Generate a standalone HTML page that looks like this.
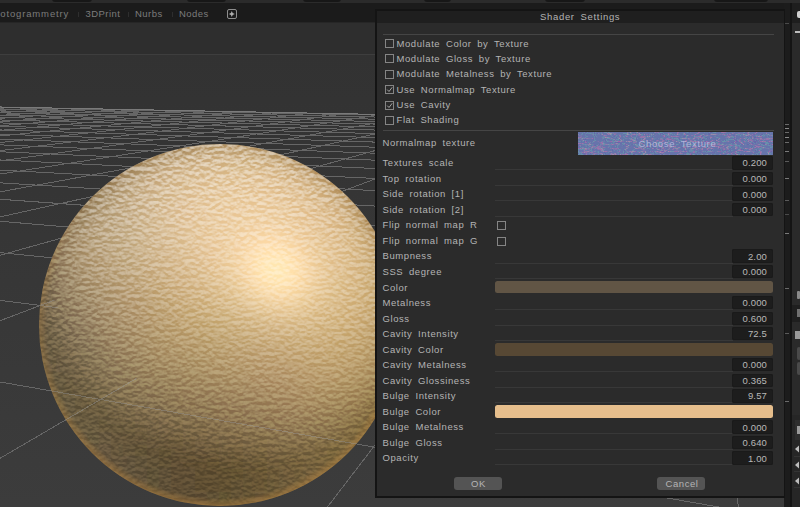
<!DOCTYPE html><html><head><meta charset="utf-8"><style>
*{margin:0;padding:0;box-sizing:border-box}
html,body{width:800px;height:507px;overflow:hidden;background:#333333;font-family:"Liberation Sans",sans-serif}
.a{position:absolute}
.t{position:absolute;font-size:9.5px;letter-spacing:0.58px;word-spacing:2.5px;color:#b4b4b4;white-space:pre;line-height:12px}
.tab{position:absolute;font-size:9.5px;letter-spacing:0.45px;color:#7c7c7c;white-space:pre;line-height:12px}
.cb{position:absolute;width:9px;height:9px;border:1px solid #858585}
.vb{position:absolute;left:732px;width:41px;height:13.4px;background:#1d1d1d;border-radius:2px;box-shadow:inset 0 0 0 1px #1a1a1a}
.vt{position:absolute;right:6px;top:1.3px;font-size:9.5px;letter-spacing:0.15px;color:#b8b8b8;line-height:12px;white-space:pre}
.bar{position:absolute;left:495px;width:278px;height:12.8px;border-radius:2.5px}
.rl{position:absolute;left:495px;width:238px;height:1px;background:#383838}
.btn{position:absolute;top:477px;height:13px;background:#545454;border-radius:3px}
</style></head><body>
<div class="a" style="left:0;top:0;width:800px;height:3px;background:#2b2b2b"></div>
<div class="a" style="left:52px;top:-6px;width:40px;height:8px;background:#171717;border-radius:3px"></div>
<div class="a" style="left:187px;top:-6px;width:39px;height:8px;background:#171717;border-radius:3px"></div>
<div class="a" style="left:303px;top:-6px;width:38px;height:8px;background:#171717;border-radius:3px"></div>
<div class="a" style="left:424px;top:-6px;width:27px;height:8px;background:#171717;border-radius:3px"></div>
<div class="a" style="left:545px;top:-6px;width:40px;height:8px;background:#171717;border-radius:3px"></div>
<div class="a" style="left:714px;top:-6px;width:54px;height:8px;background:#171717;border-radius:3px"></div>
<div class="a" style="left:0;top:2.5px;width:800px;height:19.5px;background:#1b1b1b"></div>
<div class="a" style="left:0;top:22px;width:800px;height:1px;background:#262626"></div>
<div class="tab" style="left:-13px;top:7.60px;letter-spacing:0.85px">Photogrammetry</div>
<div class="tab" style="left:85.5px;top:7.60px;">3DPrint</div>
<div class="tab" style="left:135px;top:7.60px;">Nurbs</div>
<div class="tab" style="left:179px;top:7.60px;">Nodes</div>
<div class="a" style="left:78px;top:11.5px;width:1px;height:5px;background:#2e2e2e"></div>
<div class="a" style="left:128px;top:11.5px;width:1px;height:5px;background:#2e2e2e"></div>
<div class="a" style="left:172px;top:11.5px;width:1px;height:5px;background:#2e2e2e"></div>
<div class="a" style="left:227px;top:9px;width:10px;height:10px;border:1.2px solid #8e8e8e;border-radius:2px"></div>
<svg class="a" style="left:227px;top:9px" width="10" height="10"><path d="M4.8 2 L5.7 4.1 L7.8 5 L5.7 5.9 L4.8 8 L3.9 5.9 L1.8 5 L3.9 4.1 Z" fill="#b0b0b0"/></svg>
<div class="a" style="left:0;top:55px;width:800px;height:452px;background:linear-gradient(#323232,#3c3c3c)"></div>
<div class="a" style="left:0;top:23px;width:800px;height:31px;background:#2e2e2e"></div>
<div class="a" style="left:0;top:54px;width:800px;height:1px;background:#3e3e3e"></div>
<svg width="800" height="507" style="position:absolute;left:0;top:0"><path d="M-32.4 106.4L-50.0 107.3 M-8.2 106.8L-50.0 109.1 M16.7 107.3L-50.0 111.1 M42.3 107.8L-50.0 113.4 M68.6 108.3L-50.0 115.9 M95.8 108.9L-50.0 118.8 M123.7 109.4L-50.0 122.0 M152.5 110.0L-50.0 125.7 M182.1 110.6L-50.0 129.9 M212.7 111.2L-50.0 134.9 M244.2 111.8L-50.0 140.9 M276.8 112.4L-50.0 148.0 M310.4 113.1L-50.0 156.7 M345.2 113.8L-50.0 167.7 M381.1 114.5L-50.0 181.9 M418.2 115.2L-50.0 201.0 M456.7 115.9L-50.0 228.0 M496.5 116.7L-50.0 269.2 M537.7 117.5L-50.0 339.6 M580.5 118.4L-50.0 487.6 M624.9 119.2L286.8 560.0 M671.0 120.1L747.8 560.0 M718.9 121.1L850.0 238.4 M768.7 122.1L850.0 161.5 M820.5 123.1L850.0 132.9 M-50.0 106.0L850.0 123.7 M-50.0 106.6L850.0 124.5 M-50.0 108.2L850.0 126.9 M-50.0 109.9L850.0 129.5 M-50.0 111.7L850.0 132.4 M-50.0 113.8L850.0 135.5 M-50.0 116.1L850.0 139.0 M-50.0 118.6L850.0 142.8 M-50.0 121.5L850.0 147.1 M-50.0 124.7L850.0 152.0 M-50.0 128.3L850.0 157.5 M-50.0 132.4L850.0 163.8 M-50.0 137.2L850.0 171.1 M-50.0 142.8L850.0 179.6 M-50.0 149.5L850.0 189.7 M-50.0 157.5L850.0 201.9 M-50.0 167.3L850.0 216.8 M-50.0 179.7L850.0 235.6 M-50.0 195.7L850.0 259.9 M-50.0 217.1L850.0 292.5 M-50.0 247.5L850.0 338.7 M-50.0 293.9L850.0 409.2 M-50.0 373.3L850.0 529.8 M-50.0 540.4L22.3 560.0" stroke="#666666" stroke-width="1" fill="none" shape-rendering="crispEdges"/><path d="M-56.0 105.9L1960.9 145.4" stroke="#7a7a7a" stroke-width="1" fill="none" shape-rendering="crispEdges"/></svg>
<svg width="800" height="507" style="position:absolute;left:0;top:0">
<defs>
<filter id="sblur" x="-10%" y="-10%" width="120%" height="120%"><feGaussianBlur stdDeviation="6"/></filter>
<clipPath id="sc"><circle cx="220" cy="325" r="181"/></clipPath>
<radialGradient id="srim" cx="220" cy="325" r="181" gradientUnits="userSpaceOnUse">
<stop offset="0.955" stop-color="#b08040" stop-opacity="0"/>
<stop offset="0.99" stop-color="#b08040" stop-opacity="0.45"/>
<stop offset="1" stop-color="#b08040" stop-opacity="0.6"/>
</radialGradient>
<linearGradient id="smask" x1="0" y1="144" x2="0" y2="506" gradientUnits="userSpaceOnUse">
<stop offset="0" stop-color="#fff" stop-opacity="0.9"/>
<stop offset="0.3" stop-color="#fff" stop-opacity="0.5"/>
<stop offset="0.6" stop-color="#fff" stop-opacity="0.35"/>
<stop offset="1" stop-color="#fff" stop-opacity="0.3"/>
</linearGradient>
<linearGradient id="rimv" x1="0" y1="144" x2="0" y2="506" gradientUnits="userSpaceOnUse">
<stop offset="0" stop-color="#fff" stop-opacity="0.15"/>
<stop offset="0.45" stop-color="#fff" stop-opacity="0.5"/>
<stop offset="1" stop-color="#fff" stop-opacity="1"/>
</linearGradient>
<mask id="rm" maskUnits="userSpaceOnUse" x="0" y="0" width="800" height="507"><rect x="0" y="0" width="800" height="507" fill="url(#rimv)"/></mask>
<mask id="tm" maskUnits="userSpaceOnUse" x="0" y="0" width="800" height="507"><circle cx="220" cy="325" r="181" fill="url(#smask)"/></mask>
<filter id="bump" x="0" y="0" width="100%" height="100%" color-interpolation-filters="sRGB">
<feTurbulence type="fractalNoise" baseFrequency="0.2 0.26" numOctaves="3" seed="11" result="n"/>
<feDiffuseLighting in="n" surfaceScale="3.5" diffuseConstant="1" lighting-color="#ffffff" result="l">
<feDistantLight azimuth="-90" elevation="30"/>
</feDiffuseLighting>
</filter>
</defs>
<g clip-path="url(#sc)"><g filter="url(#sblur)"><rect x="159" y="120" width="12.5" height="12.5" fill="#b8a385"/><rect x="171" y="120" width="12.5" height="12.5" fill="#b9a486"/><rect x="183" y="120" width="12.5" height="12.5" fill="#baa586"/><rect x="195" y="120" width="12.5" height="12.5" fill="#bba687"/><rect x="207" y="120" width="12.5" height="12.5" fill="#bca787"/><rect x="219" y="120" width="12.5" height="12.5" fill="#bda887"/><rect x="231" y="120" width="12.5" height="12.5" fill="#bda887"/><rect x="243" y="120" width="12.5" height="12.5" fill="#bea887"/><rect x="255" y="120" width="12.5" height="12.5" fill="#bfa887"/><rect x="267" y="120" width="12.5" height="12.5" fill="#bfa887"/><rect x="135" y="132" width="12.5" height="12.5" fill="#b4a082"/><rect x="147" y="132" width="12.5" height="12.5" fill="#b5a183"/><rect x="159" y="132" width="12.5" height="12.5" fill="#b7a284"/><rect x="171" y="132" width="12.5" height="12.5" fill="#b8a485"/><rect x="183" y="132" width="12.5" height="12.5" fill="#b9a585"/><rect x="195" y="132" width="12.5" height="12.5" fill="#bba686"/><rect x="207" y="132" width="12.5" height="12.5" fill="#bca786"/><rect x="219" y="132" width="12.5" height="12.5" fill="#bda787"/><rect x="231" y="132" width="12.5" height="12.5" fill="#bda887"/><rect x="243" y="132" width="12.5" height="12.5" fill="#bea887"/><rect x="255" y="132" width="12.5" height="12.5" fill="#bfa987"/><rect x="267" y="132" width="12.5" height="12.5" fill="#bfa886"/><rect x="279" y="132" width="12.5" height="12.5" fill="#bfa886"/><rect x="291" y="132" width="12.5" height="12.5" fill="#bfa885"/><rect x="303" y="132" width="12.5" height="12.5" fill="#bfa884"/><rect x="111" y="144" width="12.5" height="12.5" fill="#af9c7f"/><rect x="123" y="144" width="12.5" height="12.5" fill="#b19d80"/><rect x="135" y="144" width="12.5" height="12.5" fill="#b29e81"/><rect x="147" y="144" width="12.5" height="12.5" fill="#b4a082"/><rect x="159" y="144" width="12.5" height="12.5" fill="#b6a183"/><rect x="171" y="144" width="12.5" height="12.5" fill="#bca788"/><rect x="183" y="144" width="12.5" height="12.5" fill="#c6b090"/><rect x="195" y="144" width="12.5" height="12.5" fill="#cbb594"/><rect x="207" y="144" width="12.5" height="12.5" fill="#ceb895"/><rect x="219" y="144" width="12.5" height="12.5" fill="#cfb896"/><rect x="231" y="144" width="12.5" height="12.5" fill="#cfb895"/><rect x="243" y="144" width="12.5" height="12.5" fill="#ccb593"/><rect x="255" y="144" width="12.5" height="12.5" fill="#c6af8d"/><rect x="267" y="144" width="12.5" height="12.5" fill="#bfa986"/><rect x="279" y="144" width="12.5" height="12.5" fill="#bfa886"/><rect x="291" y="144" width="12.5" height="12.5" fill="#bfa885"/><rect x="303" y="144" width="12.5" height="12.5" fill="#bfa784"/><rect x="315" y="144" width="12.5" height="12.5" fill="#bfa783"/><rect x="87" y="156" width="12.5" height="12.5" fill="#aa977b"/><rect x="99" y="156" width="12.5" height="12.5" fill="#ab987c"/><rect x="111" y="156" width="12.5" height="12.5" fill="#ad9a7d"/><rect x="123" y="156" width="12.5" height="12.5" fill="#ae9b7e"/><rect x="135" y="156" width="12.5" height="12.5" fill="#b09d7f"/><rect x="147" y="156" width="12.5" height="12.5" fill="#c3ae8f"/><rect x="159" y="156" width="12.5" height="12.5" fill="#ccb695"/><rect x="171" y="156" width="12.5" height="12.5" fill="#d2bb9a"/><rect x="183" y="156" width="12.5" height="12.5" fill="#d6bf9d"/><rect x="195" y="156" width="12.5" height="12.5" fill="#d9c19f"/><rect x="207" y="156" width="12.5" height="12.5" fill="#dbc3a0"/><rect x="219" y="156" width="12.5" height="12.5" fill="#dcc4a0"/><rect x="231" y="156" width="12.5" height="12.5" fill="#dcc4a0"/><rect x="243" y="156" width="12.5" height="12.5" fill="#dcc49f"/><rect x="255" y="156" width="12.5" height="12.5" fill="#dac29d"/><rect x="267" y="156" width="12.5" height="12.5" fill="#d7be9a"/><rect x="279" y="156" width="12.5" height="12.5" fill="#d1b994"/><rect x="291" y="156" width="12.5" height="12.5" fill="#c4ac88"/><rect x="303" y="156" width="12.5" height="12.5" fill="#bfa784"/><rect x="315" y="156" width="12.5" height="12.5" fill="#bfa682"/><rect x="327" y="156" width="12.5" height="12.5" fill="#bea681"/><rect x="339" y="156" width="12.5" height="12.5" fill="#bea580"/><rect x="75" y="168" width="12.5" height="12.5" fill="#a69477"/><rect x="87" y="168" width="12.5" height="12.5" fill="#a79578"/><rect x="99" y="168" width="12.5" height="12.5" fill="#a89679"/><rect x="111" y="168" width="12.5" height="12.5" fill="#aa977b"/><rect x="123" y="168" width="12.5" height="12.5" fill="#bca88a"/><rect x="135" y="168" width="12.5" height="12.5" fill="#c8b293"/><rect x="147" y="168" width="12.5" height="12.5" fill="#d0b999"/><rect x="159" y="168" width="12.5" height="12.5" fill="#d5be9d"/><rect x="171" y="168" width="12.5" height="12.5" fill="#dac2a0"/><rect x="183" y="168" width="12.5" height="12.5" fill="#ddc5a2"/><rect x="195" y="168" width="12.5" height="12.5" fill="#e0c8a4"/><rect x="207" y="168" width="12.5" height="12.5" fill="#e1c9a5"/><rect x="219" y="168" width="12.5" height="12.5" fill="#e3caa6"/><rect x="231" y="168" width="12.5" height="12.5" fill="#e3cba6"/><rect x="243" y="168" width="12.5" height="12.5" fill="#e3caa5"/><rect x="255" y="168" width="12.5" height="12.5" fill="#e3c9a4"/><rect x="267" y="168" width="12.5" height="12.5" fill="#e1c7a2"/><rect x="279" y="168" width="12.5" height="12.5" fill="#dec49f"/><rect x="291" y="168" width="12.5" height="12.5" fill="#d9bf9a"/><rect x="303" y="168" width="12.5" height="12.5" fill="#d1b792"/><rect x="315" y="168" width="12.5" height="12.5" fill="#bfa682"/><rect x="327" y="168" width="12.5" height="12.5" fill="#bea580"/><rect x="339" y="168" width="12.5" height="12.5" fill="#bea47f"/><rect x="351" y="168" width="12.5" height="12.5" fill="#bda47d"/><rect x="63" y="180" width="12.5" height="12.5" fill="#a29073"/><rect x="75" y="180" width="12.5" height="12.5" fill="#a39174"/><rect x="87" y="180" width="12.5" height="12.5" fill="#a39275"/><rect x="99" y="180" width="12.5" height="12.5" fill="#a89679"/><rect x="111" y="180" width="12.5" height="12.5" fill="#bda98b"/><rect x="123" y="180" width="12.5" height="12.5" fill="#c7b393"/><rect x="135" y="180" width="12.5" height="12.5" fill="#cfb999"/><rect x="147" y="180" width="12.5" height="12.5" fill="#d5be9d"/><rect x="159" y="180" width="12.5" height="12.5" fill="#dac3a1"/><rect x="171" y="180" width="12.5" height="12.5" fill="#dec6a3"/><rect x="183" y="180" width="12.5" height="12.5" fill="#e1c9a5"/><rect x="195" y="180" width="12.5" height="12.5" fill="#e4cba7"/><rect x="207" y="180" width="12.5" height="12.5" fill="#e6cda8"/><rect x="219" y="180" width="12.5" height="12.5" fill="#e7cea9"/><rect x="231" y="180" width="12.5" height="12.5" fill="#e8cea9"/><rect x="243" y="180" width="12.5" height="12.5" fill="#e8cea9"/><rect x="255" y="180" width="12.5" height="12.5" fill="#e8cea8"/><rect x="267" y="180" width="12.5" height="12.5" fill="#e7cca6"/><rect x="279" y="180" width="12.5" height="12.5" fill="#e4caa4"/><rect x="291" y="180" width="12.5" height="12.5" fill="#e1c6a0"/><rect x="303" y="180" width="12.5" height="12.5" fill="#ddc29b"/><rect x="315" y="180" width="12.5" height="12.5" fill="#d5bb94"/><rect x="327" y="180" width="12.5" height="12.5" fill="#c7ad87"/><rect x="339" y="180" width="12.5" height="12.5" fill="#bda47e"/><rect x="351" y="180" width="12.5" height="12.5" fill="#bca37c"/><rect x="363" y="180" width="12.5" height="12.5" fill="#bca27b"/><rect x="51" y="192" width="12.5" height="12.5" fill="#9e8c6f"/><rect x="63" y="192" width="12.5" height="12.5" fill="#9f8d6f"/><rect x="75" y="192" width="12.5" height="12.5" fill="#9f8d71"/><rect x="87" y="192" width="12.5" height="12.5" fill="#a79578"/><rect x="99" y="192" width="12.5" height="12.5" fill="#baa788"/><rect x="111" y="192" width="12.5" height="12.5" fill="#c4b091"/><rect x="123" y="192" width="12.5" height="12.5" fill="#ccb797"/><rect x="135" y="192" width="12.5" height="12.5" fill="#d2bc9c"/><rect x="147" y="192" width="12.5" height="12.5" fill="#d7c19f"/><rect x="159" y="192" width="12.5" height="12.5" fill="#dcc5a2"/><rect x="171" y="192" width="12.5" height="12.5" fill="#e0c8a5"/><rect x="183" y="192" width="12.5" height="12.5" fill="#e4cba7"/><rect x="195" y="192" width="12.5" height="12.5" fill="#e6cda8"/><rect x="207" y="192" width="12.5" height="12.5" fill="#e8cfaa"/><rect x="219" y="192" width="12.5" height="12.5" fill="#ead0aa"/><rect x="231" y="192" width="12.5" height="12.5" fill="#ebd1ab"/><rect x="243" y="192" width="12.5" height="12.5" fill="#ebd1ab"/><rect x="255" y="192" width="12.5" height="12.5" fill="#ebd0aa"/><rect x="267" y="192" width="12.5" height="12.5" fill="#eacfa9"/><rect x="279" y="192" width="12.5" height="12.5" fill="#e8cda7"/><rect x="291" y="192" width="12.5" height="12.5" fill="#e6cba4"/><rect x="303" y="192" width="12.5" height="12.5" fill="#e2c7a0"/><rect x="315" y="192" width="12.5" height="12.5" fill="#dec29b"/><rect x="327" y="192" width="12.5" height="12.5" fill="#d6bb94"/><rect x="339" y="192" width="12.5" height="12.5" fill="#c8ae87"/><rect x="351" y="192" width="12.5" height="12.5" fill="#bca27b"/><rect x="363" y="192" width="12.5" height="12.5" fill="#bba179"/><rect x="375" y="192" width="12.5" height="12.5" fill="#bba178"/><rect x="51" y="204" width="12.5" height="12.5" fill="#9a886b"/><rect x="63" y="204" width="12.5" height="12.5" fill="#9b896b"/><rect x="75" y="204" width="12.5" height="12.5" fill="#9e8d6f"/><rect x="87" y="204" width="12.5" height="12.5" fill="#b5a283"/><rect x="99" y="204" width="12.5" height="12.5" fill="#c0ac8d"/><rect x="111" y="204" width="12.5" height="12.5" fill="#c7b393"/><rect x="123" y="204" width="12.5" height="12.5" fill="#cdb898"/><rect x="135" y="204" width="12.5" height="12.5" fill="#d3bd9c"/><rect x="147" y="204" width="12.5" height="12.5" fill="#d8c1a0"/><rect x="159" y="204" width="12.5" height="12.5" fill="#ddc5a2"/><rect x="171" y="204" width="12.5" height="12.5" fill="#e1c8a5"/><rect x="183" y="204" width="12.5" height="12.5" fill="#e5cba7"/><rect x="195" y="204" width="12.5" height="12.5" fill="#e8cea9"/><rect x="207" y="204" width="12.5" height="12.5" fill="#ead0aa"/><rect x="219" y="204" width="12.5" height="12.5" fill="#ecd1ab"/><rect x="231" y="204" width="12.5" height="12.5" fill="#edd2ac"/><rect x="243" y="204" width="12.5" height="12.5" fill="#eed3ac"/><rect x="255" y="204" width="12.5" height="12.5" fill="#eed3ac"/><rect x="267" y="204" width="12.5" height="12.5" fill="#edd2ab"/><rect x="279" y="204" width="12.5" height="12.5" fill="#ebd0a9"/><rect x="291" y="204" width="12.5" height="12.5" fill="#e9cda6"/><rect x="303" y="204" width="12.5" height="12.5" fill="#e6caa2"/><rect x="315" y="204" width="12.5" height="12.5" fill="#e2c69e"/><rect x="327" y="204" width="12.5" height="12.5" fill="#ddc199"/><rect x="339" y="204" width="12.5" height="12.5" fill="#d5b991"/><rect x="351" y="204" width="12.5" height="12.5" fill="#c5aa82"/><rect x="363" y="204" width="12.5" height="12.5" fill="#baa078"/><rect x="375" y="204" width="12.5" height="12.5" fill="#b99f76"/><rect x="39" y="216" width="12.5" height="12.5" fill="#968366"/><rect x="51" y="216" width="12.5" height="12.5" fill="#968466"/><rect x="63" y="216" width="12.5" height="12.5" fill="#968467"/><rect x="75" y="216" width="12.5" height="12.5" fill="#ae9b7c"/><rect x="87" y="216" width="12.5" height="12.5" fill="#baa687"/><rect x="99" y="216" width="12.5" height="12.5" fill="#c2ae8e"/><rect x="111" y="216" width="12.5" height="12.5" fill="#c8b494"/><rect x="123" y="216" width="12.5" height="12.5" fill="#cdb898"/><rect x="135" y="216" width="12.5" height="12.5" fill="#d3bd9b"/><rect x="147" y="216" width="12.5" height="12.5" fill="#d8c19e"/><rect x="159" y="216" width="12.5" height="12.5" fill="#ddc5a1"/><rect x="171" y="216" width="12.5" height="12.5" fill="#e1c8a4"/><rect x="183" y="216" width="12.5" height="12.5" fill="#e5cba6"/><rect x="195" y="216" width="12.5" height="12.5" fill="#e8cea8"/><rect x="207" y="216" width="12.5" height="12.5" fill="#ebd0aa"/><rect x="219" y="216" width="12.5" height="12.5" fill="#edd2ab"/><rect x="231" y="216" width="12.5" height="12.5" fill="#efd4ad"/><rect x="243" y="216" width="12.5" height="12.5" fill="#f1d5ae"/><rect x="255" y="216" width="12.5" height="12.5" fill="#f2d6af"/><rect x="267" y="216" width="12.5" height="12.5" fill="#f1d5ae"/><rect x="279" y="216" width="12.5" height="12.5" fill="#efd3ab"/><rect x="291" y="216" width="12.5" height="12.5" fill="#ecd0a8"/><rect x="303" y="216" width="12.5" height="12.5" fill="#e9cca4"/><rect x="315" y="216" width="12.5" height="12.5" fill="#e5c9a0"/><rect x="327" y="216" width="12.5" height="12.5" fill="#e1c49b"/><rect x="339" y="216" width="12.5" height="12.5" fill="#dbbf95"/><rect x="351" y="216" width="12.5" height="12.5" fill="#d1b68c"/><rect x="363" y="216" width="12.5" height="12.5" fill="#b89f76"/><rect x="375" y="216" width="12.5" height="12.5" fill="#b89e74"/><rect x="387" y="216" width="12.5" height="12.5" fill="#b89d73"/><rect x="39" y="228" width="12.5" height="12.5" fill="#917f61"/><rect x="51" y="228" width="12.5" height="12.5" fill="#927f61"/><rect x="63" y="228" width="12.5" height="12.5" fill="#a39071"/><rect x="75" y="228" width="12.5" height="12.5" fill="#b39f7e"/><rect x="87" y="228" width="12.5" height="12.5" fill="#bca787"/><rect x="99" y="228" width="12.5" height="12.5" fill="#c2ae8d"/><rect x="111" y="228" width="12.5" height="12.5" fill="#c7b392"/><rect x="123" y="228" width="12.5" height="12.5" fill="#ccb796"/><rect x="135" y="228" width="12.5" height="12.5" fill="#d1bb99"/><rect x="147" y="228" width="12.5" height="12.5" fill="#d7bf9c"/><rect x="159" y="228" width="12.5" height="12.5" fill="#dbc39f"/><rect x="171" y="228" width="12.5" height="12.5" fill="#e0c6a1"/><rect x="183" y="228" width="12.5" height="12.5" fill="#e4caa4"/><rect x="195" y="228" width="12.5" height="12.5" fill="#e8cda6"/><rect x="207" y="228" width="12.5" height="12.5" fill="#ebd0a9"/><rect x="219" y="228" width="12.5" height="12.5" fill="#eed3ab"/><rect x="231" y="228" width="12.5" height="12.5" fill="#f2d6ae"/><rect x="243" y="228" width="12.5" height="12.5" fill="#f5d9b1"/><rect x="255" y="228" width="12.5" height="12.5" fill="#f7dbb3"/><rect x="267" y="228" width="12.5" height="12.5" fill="#f8dbb3"/><rect x="279" y="228" width="12.5" height="12.5" fill="#f5d9b0"/><rect x="291" y="228" width="12.5" height="12.5" fill="#f1d4ab"/><rect x="303" y="228" width="12.5" height="12.5" fill="#eccfa6"/><rect x="315" y="228" width="12.5" height="12.5" fill="#e7cba1"/><rect x="327" y="228" width="12.5" height="12.5" fill="#e3c69d"/><rect x="339" y="228" width="12.5" height="12.5" fill="#dec297"/><rect x="351" y="228" width="12.5" height="12.5" fill="#d7bb90"/><rect x="363" y="228" width="12.5" height="12.5" fill="#cbaf84"/><rect x="375" y="228" width="12.5" height="12.5" fill="#b69c72"/><rect x="387" y="228" width="12.5" height="12.5" fill="#b69c71"/><rect x="399" y="228" width="12.5" height="12.5" fill="#b59b6f"/><rect x="27" y="240" width="12.5" height="12.5" fill="#8b795b"/><rect x="39" y="240" width="12.5" height="12.5" fill="#8b795b"/><rect x="51" y="240" width="12.5" height="12.5" fill="#8c7a5c"/><rect x="63" y="240" width="12.5" height="12.5" fill="#a99474"/><rect x="75" y="240" width="12.5" height="12.5" fill="#b49f7e"/><rect x="87" y="240" width="12.5" height="12.5" fill="#bba785"/><rect x="99" y="240" width="12.5" height="12.5" fill="#c1ac8b"/><rect x="111" y="240" width="12.5" height="12.5" fill="#c6b18f"/><rect x="123" y="240" width="12.5" height="12.5" fill="#cbb593"/><rect x="135" y="240" width="12.5" height="12.5" fill="#d0b996"/><rect x="147" y="240" width="12.5" height="12.5" fill="#d5bd99"/><rect x="159" y="240" width="12.5" height="12.5" fill="#d9c09b"/><rect x="171" y="240" width="12.5" height="12.5" fill="#dec49e"/><rect x="183" y="240" width="12.5" height="12.5" fill="#e2c8a1"/><rect x="195" y="240" width="12.5" height="12.5" fill="#e6cba4"/><rect x="207" y="240" width="12.5" height="12.5" fill="#ebcfa7"/><rect x="219" y="240" width="12.5" height="12.5" fill="#efd3aa"/><rect x="231" y="240" width="12.5" height="12.5" fill="#f4d7af"/><rect x="243" y="240" width="12.5" height="12.5" fill="#f9ddb4"/><rect x="255" y="240" width="12.5" height="12.5" fill="#fee1b8"/><rect x="267" y="240" width="12.5" height="12.5" fill="#ffe3b9"/><rect x="279" y="240" width="12.5" height="12.5" fill="#fde0b6"/><rect x="291" y="240" width="12.5" height="12.5" fill="#f7dab0"/><rect x="303" y="240" width="12.5" height="12.5" fill="#f0d3a9"/><rect x="315" y="240" width="12.5" height="12.5" fill="#e9cda2"/><rect x="327" y="240" width="12.5" height="12.5" fill="#e4c89d"/><rect x="339" y="240" width="12.5" height="12.5" fill="#e0c398"/><rect x="351" y="240" width="12.5" height="12.5" fill="#dabe92"/><rect x="363" y="240" width="12.5" height="12.5" fill="#d1b589"/><rect x="375" y="240" width="12.5" height="12.5" fill="#bda277"/><rect x="387" y="240" width="12.5" height="12.5" fill="#b49a6e"/><rect x="399" y="240" width="12.5" height="12.5" fill="#b3996d"/><rect x="27" y="252" width="12.5" height="12.5" fill="#847356"/><rect x="39" y="252" width="12.5" height="12.5" fill="#857356"/><rect x="51" y="252" width="12.5" height="12.5" fill="#988465"/><rect x="63" y="252" width="12.5" height="12.5" fill="#a99473"/><rect x="75" y="252" width="12.5" height="12.5" fill="#b39e7c"/><rect x="87" y="252" width="12.5" height="12.5" fill="#baa483"/><rect x="99" y="252" width="12.5" height="12.5" fill="#bfa987"/><rect x="111" y="252" width="12.5" height="12.5" fill="#c4ae8b"/><rect x="123" y="252" width="12.5" height="12.5" fill="#c8b28f"/><rect x="135" y="252" width="12.5" height="12.5" fill="#cdb691"/><rect x="147" y="252" width="12.5" height="12.5" fill="#d2b994"/><rect x="159" y="252" width="12.5" height="12.5" fill="#d7bd97"/><rect x="171" y="252" width="12.5" height="12.5" fill="#dbc19a"/><rect x="183" y="252" width="12.5" height="12.5" fill="#e0c59d"/><rect x="195" y="252" width="12.5" height="12.5" fill="#e4c8a0"/><rect x="207" y="252" width="12.5" height="12.5" fill="#e9cca4"/><rect x="219" y="252" width="12.5" height="12.5" fill="#eed2a8"/><rect x="231" y="252" width="12.5" height="12.5" fill="#f4d8ae"/><rect x="243" y="252" width="12.5" height="12.5" fill="#fce0b5"/><rect x="255" y="252" width="12.5" height="12.5" fill="#ffe7bc"/><rect x="267" y="252" width="12.5" height="12.5" fill="#ffeabf"/><rect x="279" y="252" width="12.5" height="12.5" fill="#ffe8bc"/><rect x="291" y="252" width="12.5" height="12.5" fill="#fee1b5"/><rect x="303" y="252" width="12.5" height="12.5" fill="#f4d7ac"/><rect x="315" y="252" width="12.5" height="12.5" fill="#ebcfa3"/><rect x="327" y="252" width="12.5" height="12.5" fill="#e5c89d"/><rect x="339" y="252" width="12.5" height="12.5" fill="#e0c497"/><rect x="351" y="252" width="12.5" height="12.5" fill="#dbbf92"/><rect x="363" y="252" width="12.5" height="12.5" fill="#d3b78a"/><rect x="375" y="252" width="12.5" height="12.5" fill="#c6ab7e"/><rect x="387" y="252" width="12.5" height="12.5" fill="#b1976b"/><rect x="399" y="252" width="12.5" height="12.5" fill="#b1976a"/><rect x="15" y="264" width="12.5" height="12.5" fill="#7d6d51"/><rect x="27" y="264" width="12.5" height="12.5" fill="#7d6c50"/><rect x="39" y="264" width="12.5" height="12.5" fill="#7d6c50"/><rect x="51" y="264" width="12.5" height="12.5" fill="#988565"/><rect x="63" y="264" width="12.5" height="12.5" fill="#a69271"/><rect x="75" y="264" width="12.5" height="12.5" fill="#af9a79"/><rect x="87" y="264" width="12.5" height="12.5" fill="#b6a17f"/><rect x="99" y="264" width="12.5" height="12.5" fill="#bca683"/><rect x="111" y="264" width="12.5" height="12.5" fill="#c1aa87"/><rect x="123" y="264" width="12.5" height="12.5" fill="#c5ae8a"/><rect x="135" y="264" width="12.5" height="12.5" fill="#cab28c"/><rect x="147" y="264" width="12.5" height="12.5" fill="#cfb58f"/><rect x="159" y="264" width="12.5" height="12.5" fill="#d3b992"/><rect x="171" y="264" width="12.5" height="12.5" fill="#d8bd95"/><rect x="183" y="264" width="12.5" height="12.5" fill="#dcc198"/><rect x="195" y="264" width="12.5" height="12.5" fill="#e0c59b"/><rect x="207" y="264" width="12.5" height="12.5" fill="#e5c99f"/><rect x="219" y="264" width="12.5" height="12.5" fill="#ebcfa4"/><rect x="231" y="264" width="12.5" height="12.5" fill="#f2d6ac"/><rect x="243" y="264" width="12.5" height="12.5" fill="#fcdfb4"/><rect x="255" y="264" width="12.5" height="12.5" fill="#ffe8bc"/><rect x="267" y="264" width="12.5" height="12.5" fill="#ffedc0"/><rect x="279" y="264" width="12.5" height="12.5" fill="#ffebbf"/><rect x="291" y="264" width="12.5" height="12.5" fill="#ffe4b7"/><rect x="303" y="264" width="12.5" height="12.5" fill="#f6d9ad"/><rect x="315" y="264" width="12.5" height="12.5" fill="#eccfa3"/><rect x="327" y="264" width="12.5" height="12.5" fill="#e5c89c"/><rect x="339" y="264" width="12.5" height="12.5" fill="#e0c396"/><rect x="351" y="264" width="12.5" height="12.5" fill="#dbbe91"/><rect x="363" y="264" width="12.5" height="12.5" fill="#d4b88a"/><rect x="375" y="264" width="12.5" height="12.5" fill="#c9ae7f"/><rect x="387" y="264" width="12.5" height="12.5" fill="#ae9468"/><rect x="399" y="264" width="12.5" height="12.5" fill="#ae9467"/><rect x="411" y="264" width="12.5" height="12.5" fill="#ae9466"/><rect x="15" y="276" width="12.5" height="12.5" fill="#79694e"/><rect x="27" y="276" width="12.5" height="12.5" fill="#77674c"/><rect x="39" y="276" width="12.5" height="12.5" fill="#7a694d"/><rect x="51" y="276" width="12.5" height="12.5" fill="#958263"/><rect x="63" y="276" width="12.5" height="12.5" fill="#a28e6e"/><rect x="75" y="276" width="12.5" height="12.5" fill="#ab9675"/><rect x="87" y="276" width="12.5" height="12.5" fill="#b29c7a"/><rect x="99" y="276" width="12.5" height="12.5" fill="#b7a17e"/><rect x="111" y="276" width="12.5" height="12.5" fill="#bca581"/><rect x="123" y="276" width="12.5" height="12.5" fill="#c1a984"/><rect x="135" y="276" width="12.5" height="12.5" fill="#c6ad87"/><rect x="147" y="276" width="12.5" height="12.5" fill="#cbb189"/><rect x="159" y="276" width="12.5" height="12.5" fill="#cfb58c"/><rect x="171" y="276" width="12.5" height="12.5" fill="#d4b88f"/><rect x="183" y="276" width="12.5" height="12.5" fill="#d8bc92"/><rect x="195" y="276" width="12.5" height="12.5" fill="#dcc095"/><rect x="207" y="276" width="12.5" height="12.5" fill="#e0c59a"/><rect x="219" y="276" width="12.5" height="12.5" fill="#e6ca9f"/><rect x="231" y="276" width="12.5" height="12.5" fill="#edd1a6"/><rect x="243" y="276" width="12.5" height="12.5" fill="#f7daaf"/><rect x="255" y="276" width="12.5" height="12.5" fill="#ffe3b7"/><rect x="267" y="276" width="12.5" height="12.5" fill="#ffe8bc"/><rect x="279" y="276" width="12.5" height="12.5" fill="#ffe8bb"/><rect x="291" y="276" width="12.5" height="12.5" fill="#fee1b4"/><rect x="303" y="276" width="12.5" height="12.5" fill="#f4d7aa"/><rect x="315" y="276" width="12.5" height="12.5" fill="#eacea1"/><rect x="327" y="276" width="12.5" height="12.5" fill="#e3c799"/><rect x="339" y="276" width="12.5" height="12.5" fill="#dec294"/><rect x="351" y="276" width="12.5" height="12.5" fill="#dabd8f"/><rect x="363" y="276" width="12.5" height="12.5" fill="#d3b788"/><rect x="375" y="276" width="12.5" height="12.5" fill="#caae7f"/><rect x="387" y="276" width="12.5" height="12.5" fill="#b79d6e"/><rect x="399" y="276" width="12.5" height="12.5" fill="#ab9163"/><rect x="411" y="276" width="12.5" height="12.5" fill="#ab9162"/><rect x="15" y="288" width="12.5" height="12.5" fill="#77674c"/><rect x="27" y="288" width="12.5" height="12.5" fill="#75654a"/><rect x="39" y="288" width="12.5" height="12.5" fill="#7c6b4f"/><rect x="51" y="288" width="12.5" height="12.5" fill="#907e60"/><rect x="63" y="288" width="12.5" height="12.5" fill="#9c8969"/><rect x="75" y="288" width="12.5" height="12.5" fill="#a59170"/><rect x="87" y="288" width="12.5" height="12.5" fill="#ac9775"/><rect x="99" y="288" width="12.5" height="12.5" fill="#b29c79"/><rect x="111" y="288" width="12.5" height="12.5" fill="#b8a07c"/><rect x="123" y="288" width="12.5" height="12.5" fill="#bda47f"/><rect x="135" y="288" width="12.5" height="12.5" fill="#c1a881"/><rect x="147" y="288" width="12.5" height="12.5" fill="#c6ac83"/><rect x="159" y="288" width="12.5" height="12.5" fill="#cab086"/><rect x="171" y="288" width="12.5" height="12.5" fill="#cfb489"/><rect x="183" y="288" width="12.5" height="12.5" fill="#d3b78c"/><rect x="195" y="288" width="12.5" height="12.5" fill="#d7bb8f"/><rect x="207" y="288" width="12.5" height="12.5" fill="#dbbf93"/><rect x="219" y="288" width="12.5" height="12.5" fill="#e0c498"/><rect x="231" y="288" width="12.5" height="12.5" fill="#e6cb9e"/><rect x="243" y="288" width="12.5" height="12.5" fill="#eed2a6"/><rect x="255" y="288" width="12.5" height="12.5" fill="#f5daad"/><rect x="267" y="288" width="12.5" height="12.5" fill="#fbdeb2"/><rect x="279" y="288" width="12.5" height="12.5" fill="#fbdeb1"/><rect x="291" y="288" width="12.5" height="12.5" fill="#f6daac"/><rect x="303" y="288" width="12.5" height="12.5" fill="#eed2a4"/><rect x="315" y="288" width="12.5" height="12.5" fill="#e6ca9c"/><rect x="327" y="288" width="12.5" height="12.5" fill="#e0c496"/><rect x="339" y="288" width="12.5" height="12.5" fill="#dcbf91"/><rect x="351" y="288" width="12.5" height="12.5" fill="#d8bb8c"/><rect x="363" y="288" width="12.5" height="12.5" fill="#d2b586"/><rect x="375" y="288" width="12.5" height="12.5" fill="#c9ad7d"/><rect x="387" y="288" width="12.5" height="12.5" fill="#ba9f6f"/><rect x="399" y="288" width="12.5" height="12.5" fill="#a78e5f"/><rect x="411" y="288" width="12.5" height="12.5" fill="#a88e5f"/><rect x="15" y="300" width="12.5" height="12.5" fill="#75654b"/><rect x="27" y="300" width="12.5" height="12.5" fill="#736349"/><rect x="39" y="300" width="12.5" height="12.5" fill="#78684d"/><rect x="51" y="300" width="12.5" height="12.5" fill="#8b795c"/><rect x="63" y="300" width="12.5" height="12.5" fill="#968364"/><rect x="75" y="300" width="12.5" height="12.5" fill="#9f8b6b"/><rect x="87" y="300" width="12.5" height="12.5" fill="#a69170"/><rect x="99" y="300" width="12.5" height="12.5" fill="#ad9774"/><rect x="111" y="300" width="12.5" height="12.5" fill="#b29b77"/><rect x="123" y="300" width="12.5" height="12.5" fill="#b89f79"/><rect x="135" y="300" width="12.5" height="12.5" fill="#bca37b"/><rect x="147" y="300" width="12.5" height="12.5" fill="#c1a77e"/><rect x="159" y="300" width="12.5" height="12.5" fill="#c5ab80"/><rect x="171" y="300" width="12.5" height="12.5" fill="#caaf83"/><rect x="183" y="300" width="12.5" height="12.5" fill="#cdb286"/><rect x="195" y="300" width="12.5" height="12.5" fill="#d1b689"/><rect x="207" y="300" width="12.5" height="12.5" fill="#d5ba8c"/><rect x="219" y="300" width="12.5" height="12.5" fill="#d9be91"/><rect x="231" y="300" width="12.5" height="12.5" fill="#ddc296"/><rect x="243" y="300" width="12.5" height="12.5" fill="#e3c89c"/><rect x="255" y="300" width="12.5" height="12.5" fill="#e9cea1"/><rect x="267" y="300" width="12.5" height="12.5" fill="#edd1a5"/><rect x="279" y="300" width="12.5" height="12.5" fill="#eed2a5"/><rect x="291" y="300" width="12.5" height="12.5" fill="#ebcfa1"/><rect x="303" y="300" width="12.5" height="12.5" fill="#e6ca9c"/><rect x="315" y="300" width="12.5" height="12.5" fill="#e1c496"/><rect x="327" y="300" width="12.5" height="12.5" fill="#dcc091"/><rect x="339" y="300" width="12.5" height="12.5" fill="#d9bc8d"/><rect x="351" y="300" width="12.5" height="12.5" fill="#d5b888"/><rect x="363" y="300" width="12.5" height="12.5" fill="#cfb383"/><rect x="375" y="300" width="12.5" height="12.5" fill="#c7ab7b"/><rect x="387" y="300" width="12.5" height="12.5" fill="#b99e6e"/><rect x="399" y="300" width="12.5" height="12.5" fill="#a48a5b"/><rect x="411" y="300" width="12.5" height="12.5" fill="#a48b5b"/><rect x="15" y="312" width="12.5" height="12.5" fill="#73644a"/><rect x="27" y="312" width="12.5" height="12.5" fill="#716248"/><rect x="39" y="312" width="12.5" height="12.5" fill="#736349"/><rect x="51" y="312" width="12.5" height="12.5" fill="#847357"/><rect x="63" y="312" width="12.5" height="12.5" fill="#8f7d5f"/><rect x="75" y="312" width="12.5" height="12.5" fill="#988566"/><rect x="87" y="312" width="12.5" height="12.5" fill="#a08b6a"/><rect x="99" y="312" width="12.5" height="12.5" fill="#a7916e"/><rect x="111" y="312" width="12.5" height="12.5" fill="#ad9671"/><rect x="123" y="312" width="12.5" height="12.5" fill="#b29a74"/><rect x="135" y="312" width="12.5" height="12.5" fill="#b79e76"/><rect x="147" y="312" width="12.5" height="12.5" fill="#bca278"/><rect x="159" y="312" width="12.5" height="12.5" fill="#c0a67b"/><rect x="171" y="312" width="12.5" height="12.5" fill="#c4a97d"/><rect x="183" y="312" width="12.5" height="12.5" fill="#c8ad7f"/><rect x="195" y="312" width="12.5" height="12.5" fill="#cbb082"/><rect x="207" y="312" width="12.5" height="12.5" fill="#ceb385"/><rect x="219" y="312" width="12.5" height="12.5" fill="#d1b789"/><rect x="231" y="312" width="12.5" height="12.5" fill="#d5ba8d"/><rect x="243" y="312" width="12.5" height="12.5" fill="#d9be91"/><rect x="255" y="312" width="12.5" height="12.5" fill="#ddc295"/><rect x="267" y="312" width="12.5" height="12.5" fill="#e0c498"/><rect x="279" y="312" width="12.5" height="12.5" fill="#e1c598"/><rect x="291" y="312" width="12.5" height="12.5" fill="#e0c496"/><rect x="303" y="312" width="12.5" height="12.5" fill="#dec193"/><rect x="315" y="312" width="12.5" height="12.5" fill="#dabe8f"/><rect x="327" y="312" width="12.5" height="12.5" fill="#d8bb8c"/><rect x="339" y="312" width="12.5" height="12.5" fill="#d5b888"/><rect x="351" y="312" width="12.5" height="12.5" fill="#d1b484"/><rect x="363" y="312" width="12.5" height="12.5" fill="#ccaf7f"/><rect x="375" y="312" width="12.5" height="12.5" fill="#c4a877"/><rect x="387" y="312" width="12.5" height="12.5" fill="#b69b6b"/><rect x="399" y="312" width="12.5" height="12.5" fill="#a08657"/><rect x="411" y="312" width="12.5" height="12.5" fill="#a18757"/><rect x="15" y="324" width="12.5" height="12.5" fill="#726349"/><rect x="27" y="324" width="12.5" height="12.5" fill="#6f6147"/><rect x="39" y="324" width="12.5" height="12.5" fill="#6d5e44"/><rect x="51" y="324" width="12.5" height="12.5" fill="#7d6d51"/><rect x="63" y="324" width="12.5" height="12.5" fill="#89775a"/><rect x="75" y="324" width="12.5" height="12.5" fill="#927f60"/><rect x="87" y="324" width="12.5" height="12.5" fill="#9a8665"/><rect x="99" y="324" width="12.5" height="12.5" fill="#a18c69"/><rect x="111" y="324" width="12.5" height="12.5" fill="#a7916c"/><rect x="123" y="324" width="12.5" height="12.5" fill="#ac956f"/><rect x="135" y="324" width="12.5" height="12.5" fill="#b19971"/><rect x="147" y="324" width="12.5" height="12.5" fill="#b69d73"/><rect x="159" y="324" width="12.5" height="12.5" fill="#baa075"/><rect x="171" y="324" width="12.5" height="12.5" fill="#bea477"/><rect x="183" y="324" width="12.5" height="12.5" fill="#c2a77a"/><rect x="195" y="324" width="12.5" height="12.5" fill="#c5aa7c"/><rect x="207" y="324" width="12.5" height="12.5" fill="#c8ad7f"/><rect x="219" y="324" width="12.5" height="12.5" fill="#cab082"/><rect x="231" y="324" width="12.5" height="12.5" fill="#cdb285"/><rect x="243" y="324" width="12.5" height="12.5" fill="#d0b588"/><rect x="255" y="324" width="12.5" height="12.5" fill="#d3b78b"/><rect x="267" y="324" width="12.5" height="12.5" fill="#d5b98d"/><rect x="279" y="324" width="12.5" height="12.5" fill="#d6ba8d"/><rect x="291" y="324" width="12.5" height="12.5" fill="#d6ba8d"/><rect x="303" y="324" width="12.5" height="12.5" fill="#d5b98b"/><rect x="315" y="324" width="12.5" height="12.5" fill="#d4b889"/><rect x="327" y="324" width="12.5" height="12.5" fill="#d2b686"/><rect x="339" y="324" width="12.5" height="12.5" fill="#d0b483"/><rect x="351" y="324" width="12.5" height="12.5" fill="#cdb07f"/><rect x="363" y="324" width="12.5" height="12.5" fill="#c7ab7a"/><rect x="375" y="324" width="12.5" height="12.5" fill="#c0a473"/><rect x="387" y="324" width="12.5" height="12.5" fill="#b29767"/><rect x="399" y="324" width="12.5" height="12.5" fill="#9b8253"/><rect x="411" y="324" width="12.5" height="12.5" fill="#9d8353"/><rect x="15" y="336" width="12.5" height="12.5" fill="#706249"/><rect x="27" y="336" width="12.5" height="12.5" fill="#6e6046"/><rect x="39" y="336" width="12.5" height="12.5" fill="#6c5e44"/><rect x="51" y="336" width="12.5" height="12.5" fill="#76674b"/><rect x="63" y="336" width="12.5" height="12.5" fill="#827154"/><rect x="75" y="336" width="12.5" height="12.5" fill="#8b795b"/><rect x="87" y="336" width="12.5" height="12.5" fill="#938060"/><rect x="99" y="336" width="12.5" height="12.5" fill="#9b8664"/><rect x="111" y="336" width="12.5" height="12.5" fill="#a18b67"/><rect x="123" y="336" width="12.5" height="12.5" fill="#a7906a"/><rect x="135" y="336" width="12.5" height="12.5" fill="#ac946c"/><rect x="147" y="336" width="12.5" height="12.5" fill="#b0986e"/><rect x="159" y="336" width="12.5" height="12.5" fill="#b49b70"/><rect x="171" y="336" width="12.5" height="12.5" fill="#b89e72"/><rect x="183" y="336" width="12.5" height="12.5" fill="#bba174"/><rect x="195" y="336" width="12.5" height="12.5" fill="#bea476"/><rect x="207" y="336" width="12.5" height="12.5" fill="#c1a779"/><rect x="219" y="336" width="12.5" height="12.5" fill="#c3a97b"/><rect x="231" y="336" width="12.5" height="12.5" fill="#c6ab7e"/><rect x="243" y="336" width="12.5" height="12.5" fill="#c8ad80"/><rect x="255" y="336" width="12.5" height="12.5" fill="#caae82"/><rect x="267" y="336" width="12.5" height="12.5" fill="#ccb083"/><rect x="279" y="336" width="12.5" height="12.5" fill="#cdb184"/><rect x="291" y="336" width="12.5" height="12.5" fill="#ceb284"/><rect x="303" y="336" width="12.5" height="12.5" fill="#ceb283"/><rect x="315" y="336" width="12.5" height="12.5" fill="#ceb182"/><rect x="327" y="336" width="12.5" height="12.5" fill="#cdb080"/><rect x="339" y="336" width="12.5" height="12.5" fill="#cbae7e"/><rect x="351" y="336" width="12.5" height="12.5" fill="#c8ab7a"/><rect x="363" y="336" width="12.5" height="12.5" fill="#c2a675"/><rect x="375" y="336" width="12.5" height="12.5" fill="#ba9f6d"/><rect x="387" y="336" width="12.5" height="12.5" fill="#ac9261"/><rect x="399" y="336" width="12.5" height="12.5" fill="#977e4f"/><rect x="411" y="336" width="12.5" height="12.5" fill="#98804f"/><rect x="15" y="348" width="12.5" height="12.5" fill="#706248"/><rect x="27" y="348" width="12.5" height="12.5" fill="#6e6046"/><rect x="39" y="348" width="12.5" height="12.5" fill="#6c5e44"/><rect x="51" y="348" width="12.5" height="12.5" fill="#6e6045"/><rect x="63" y="348" width="12.5" height="12.5" fill="#7b6b4e"/><rect x="75" y="348" width="12.5" height="12.5" fill="#857455"/><rect x="87" y="348" width="12.5" height="12.5" fill="#8d7b5b"/><rect x="99" y="348" width="12.5" height="12.5" fill="#94815f"/><rect x="111" y="348" width="12.5" height="12.5" fill="#9b8662"/><rect x="123" y="348" width="12.5" height="12.5" fill="#a08a65"/><rect x="135" y="348" width="12.5" height="12.5" fill="#a58e67"/><rect x="147" y="348" width="12.5" height="12.5" fill="#aa9269"/><rect x="159" y="348" width="12.5" height="12.5" fill="#ae956b"/><rect x="171" y="348" width="12.5" height="12.5" fill="#b1986d"/><rect x="183" y="348" width="12.5" height="12.5" fill="#b49b6f"/><rect x="195" y="348" width="12.5" height="12.5" fill="#b79e71"/><rect x="207" y="348" width="12.5" height="12.5" fill="#baa073"/><rect x="219" y="348" width="12.5" height="12.5" fill="#bca275"/><rect x="231" y="348" width="12.5" height="12.5" fill="#bea377"/><rect x="243" y="348" width="12.5" height="12.5" fill="#c0a579"/><rect x="255" y="348" width="12.5" height="12.5" fill="#c2a67a"/><rect x="267" y="348" width="12.5" height="12.5" fill="#c4a87c"/><rect x="279" y="348" width="12.5" height="12.5" fill="#c5a97c"/><rect x="291" y="348" width="12.5" height="12.5" fill="#c7aa7d"/><rect x="303" y="348" width="12.5" height="12.5" fill="#c7ab7d"/><rect x="315" y="348" width="12.5" height="12.5" fill="#c8ab7c"/><rect x="327" y="348" width="12.5" height="12.5" fill="#c7ab7a"/><rect x="339" y="348" width="12.5" height="12.5" fill="#c5a978"/><rect x="351" y="348" width="12.5" height="12.5" fill="#c2a674"/><rect x="363" y="348" width="12.5" height="12.5" fill="#bca16f"/><rect x="375" y="348" width="12.5" height="12.5" fill="#b49967"/><rect x="387" y="348" width="12.5" height="12.5" fill="#a48b5a"/><rect x="399" y="348" width="12.5" height="12.5" fill="#927a4a"/><rect x="411" y="348" width="12.5" height="12.5" fill="#947c4b"/><rect x="15" y="360" width="12.5" height="12.5" fill="#6f6148"/><rect x="27" y="360" width="12.5" height="12.5" fill="#6d5f46"/><rect x="39" y="360" width="12.5" height="12.5" fill="#6c5e44"/><rect x="51" y="360" width="12.5" height="12.5" fill="#6a5c42"/><rect x="63" y="360" width="12.5" height="12.5" fill="#736448"/><rect x="75" y="360" width="12.5" height="12.5" fill="#7e6d4f"/><rect x="87" y="360" width="12.5" height="12.5" fill="#867555"/><rect x="99" y="360" width="12.5" height="12.5" fill="#8e7b5a"/><rect x="111" y="360" width="12.5" height="12.5" fill="#94805d"/><rect x="123" y="360" width="12.5" height="12.5" fill="#9a8560"/><rect x="135" y="360" width="12.5" height="12.5" fill="#9f8962"/><rect x="147" y="360" width="12.5" height="12.5" fill="#a38c64"/><rect x="159" y="360" width="12.5" height="12.5" fill="#a78f66"/><rect x="171" y="360" width="12.5" height="12.5" fill="#aa9268"/><rect x="183" y="360" width="12.5" height="12.5" fill="#ad956a"/><rect x="195" y="360" width="12.5" height="12.5" fill="#b0976b"/><rect x="207" y="360" width="12.5" height="12.5" fill="#b3996d"/><rect x="219" y="360" width="12.5" height="12.5" fill="#b59b6f"/><rect x="231" y="360" width="12.5" height="12.5" fill="#b79c71"/><rect x="243" y="360" width="12.5" height="12.5" fill="#b99e72"/><rect x="255" y="360" width="12.5" height="12.5" fill="#bb9f74"/><rect x="267" y="360" width="12.5" height="12.5" fill="#bca075"/><rect x="279" y="360" width="12.5" height="12.5" fill="#bea176"/><rect x="291" y="360" width="12.5" height="12.5" fill="#bfa376"/><rect x="303" y="360" width="12.5" height="12.5" fill="#c1a476"/><rect x="315" y="360" width="12.5" height="12.5" fill="#c1a576"/><rect x="327" y="360" width="12.5" height="12.5" fill="#c1a474"/><rect x="339" y="360" width="12.5" height="12.5" fill="#bfa372"/><rect x="351" y="360" width="12.5" height="12.5" fill="#bb9f6e"/><rect x="363" y="360" width="12.5" height="12.5" fill="#b59a69"/><rect x="375" y="360" width="12.5" height="12.5" fill="#ac9160"/><rect x="387" y="360" width="12.5" height="12.5" fill="#9a8151"/><rect x="399" y="360" width="12.5" height="12.5" fill="#8e7646"/><rect x="411" y="360" width="12.5" height="12.5" fill="#907847"/><rect x="15" y="372" width="12.5" height="12.5" fill="#6f6148"/><rect x="27" y="372" width="12.5" height="12.5" fill="#6d6046"/><rect x="39" y="372" width="12.5" height="12.5" fill="#6c5e44"/><rect x="51" y="372" width="12.5" height="12.5" fill="#6b5d42"/><rect x="63" y="372" width="12.5" height="12.5" fill="#6b5c41"/><rect x="75" y="372" width="12.5" height="12.5" fill="#766649"/><rect x="87" y="372" width="12.5" height="12.5" fill="#7f6e4f"/><rect x="99" y="372" width="12.5" height="12.5" fill="#877554"/><rect x="111" y="372" width="12.5" height="12.5" fill="#8d7a58"/><rect x="123" y="372" width="12.5" height="12.5" fill="#937f5b"/><rect x="135" y="372" width="12.5" height="12.5" fill="#98825d"/><rect x="147" y="372" width="12.5" height="12.5" fill="#9c865f"/><rect x="159" y="372" width="12.5" height="12.5" fill="#9f8961"/><rect x="171" y="372" width="12.5" height="12.5" fill="#a38b63"/><rect x="183" y="372" width="12.5" height="12.5" fill="#a68e64"/><rect x="195" y="372" width="12.5" height="12.5" fill="#a89066"/><rect x="207" y="372" width="12.5" height="12.5" fill="#ab9268"/><rect x="219" y="372" width="12.5" height="12.5" fill="#ad9469"/><rect x="231" y="372" width="12.5" height="12.5" fill="#af956b"/><rect x="243" y="372" width="12.5" height="12.5" fill="#b1966c"/><rect x="255" y="372" width="12.5" height="12.5" fill="#b3976d"/><rect x="267" y="372" width="12.5" height="12.5" fill="#b5986e"/><rect x="279" y="372" width="12.5" height="12.5" fill="#b69a6f"/><rect x="291" y="372" width="12.5" height="12.5" fill="#b89c70"/><rect x="303" y="372" width="12.5" height="12.5" fill="#b99d70"/><rect x="315" y="372" width="12.5" height="12.5" fill="#ba9e70"/><rect x="327" y="372" width="12.5" height="12.5" fill="#b99d6e"/><rect x="339" y="372" width="12.5" height="12.5" fill="#b79c6c"/><rect x="351" y="372" width="12.5" height="12.5" fill="#b39868"/><rect x="363" y="372" width="12.5" height="12.5" fill="#ad9262"/><rect x="375" y="372" width="12.5" height="12.5" fill="#a28958"/><rect x="387" y="372" width="12.5" height="12.5" fill="#866f40"/><rect x="399" y="372" width="12.5" height="12.5" fill="#897142"/><rect x="411" y="372" width="12.5" height="12.5" fill="#8b7444"/><rect x="27" y="384" width="12.5" height="12.5" fill="#6d6047"/><rect x="39" y="384" width="12.5" height="12.5" fill="#6c5e45"/><rect x="51" y="384" width="12.5" height="12.5" fill="#6b5d43"/><rect x="63" y="384" width="12.5" height="12.5" fill="#6a5c41"/><rect x="75" y="384" width="12.5" height="12.5" fill="#6d5e42"/><rect x="87" y="384" width="12.5" height="12.5" fill="#776749"/><rect x="99" y="384" width="12.5" height="12.5" fill="#7f6e4e"/><rect x="111" y="384" width="12.5" height="12.5" fill="#867352"/><rect x="123" y="384" width="12.5" height="12.5" fill="#8b7855"/><rect x="135" y="384" width="12.5" height="12.5" fill="#907c58"/><rect x="147" y="384" width="12.5" height="12.5" fill="#947f5a"/><rect x="159" y="384" width="12.5" height="12.5" fill="#98825b"/><rect x="171" y="384" width="12.5" height="12.5" fill="#9b845d"/><rect x="183" y="384" width="12.5" height="12.5" fill="#9e865f"/><rect x="195" y="384" width="12.5" height="12.5" fill="#a08860"/><rect x="207" y="384" width="12.5" height="12.5" fill="#a38a62"/><rect x="219" y="384" width="12.5" height="12.5" fill="#a58c63"/><rect x="231" y="384" width="12.5" height="12.5" fill="#a78e65"/><rect x="243" y="384" width="12.5" height="12.5" fill="#a98f66"/><rect x="255" y="384" width="12.5" height="12.5" fill="#ab9067"/><rect x="267" y="384" width="12.5" height="12.5" fill="#ad9268"/><rect x="279" y="384" width="12.5" height="12.5" fill="#af9369"/><rect x="291" y="384" width="12.5" height="12.5" fill="#b1956a"/><rect x="303" y="384" width="12.5" height="12.5" fill="#b2966a"/><rect x="315" y="384" width="12.5" height="12.5" fill="#b29769"/><rect x="327" y="384" width="12.5" height="12.5" fill="#b19668"/><rect x="339" y="384" width="12.5" height="12.5" fill="#af9465"/><rect x="351" y="384" width="12.5" height="12.5" fill="#aa9060"/><rect x="363" y="384" width="12.5" height="12.5" fill="#a3895a"/><rect x="375" y="384" width="12.5" height="12.5" fill="#967e4e"/><rect x="387" y="384" width="12.5" height="12.5" fill="#826b3d"/><rect x="399" y="384" width="12.5" height="12.5" fill="#846d3e"/><rect x="27" y="396" width="12.5" height="12.5" fill="#6d6047"/><rect x="39" y="396" width="12.5" height="12.5" fill="#6c5f45"/><rect x="51" y="396" width="12.5" height="12.5" fill="#6b5e43"/><rect x="63" y="396" width="12.5" height="12.5" fill="#6b5d42"/><rect x="75" y="396" width="12.5" height="12.5" fill="#6a5c40"/><rect x="87" y="396" width="12.5" height="12.5" fill="#6e5e41"/><rect x="99" y="396" width="12.5" height="12.5" fill="#766647"/><rect x="111" y="396" width="12.5" height="12.5" fill="#7d6c4c"/><rect x="123" y="396" width="12.5" height="12.5" fill="#83704f"/><rect x="135" y="396" width="12.5" height="12.5" fill="#877452"/><rect x="147" y="396" width="12.5" height="12.5" fill="#8b7754"/><rect x="159" y="396" width="12.5" height="12.5" fill="#8f7a56"/><rect x="171" y="396" width="12.5" height="12.5" fill="#927c57"/><rect x="183" y="396" width="12.5" height="12.5" fill="#957e59"/><rect x="195" y="396" width="12.5" height="12.5" fill="#98815a"/><rect x="207" y="396" width="12.5" height="12.5" fill="#9a835c"/><rect x="219" y="396" width="12.5" height="12.5" fill="#9d845d"/><rect x="231" y="396" width="12.5" height="12.5" fill="#9f865f"/><rect x="243" y="396" width="12.5" height="12.5" fill="#a18860"/><rect x="255" y="396" width="12.5" height="12.5" fill="#a38961"/><rect x="267" y="396" width="12.5" height="12.5" fill="#a58b62"/><rect x="279" y="396" width="12.5" height="12.5" fill="#a78c63"/><rect x="291" y="396" width="12.5" height="12.5" fill="#a98e64"/><rect x="303" y="396" width="12.5" height="12.5" fill="#aa8f64"/><rect x="315" y="396" width="12.5" height="12.5" fill="#a98f63"/><rect x="327" y="396" width="12.5" height="12.5" fill="#a88e61"/><rect x="339" y="396" width="12.5" height="12.5" fill="#a58b5d"/><rect x="351" y="396" width="12.5" height="12.5" fill="#a08658"/><rect x="363" y="396" width="12.5" height="12.5" fill="#977f50"/><rect x="375" y="396" width="12.5" height="12.5" fill="#856e41"/><rect x="387" y="396" width="12.5" height="12.5" fill="#836c3e"/><rect x="399" y="396" width="12.5" height="12.5" fill="#846d3e"/><rect x="27" y="408" width="12.5" height="12.5" fill="#6d6047"/><rect x="39" y="408" width="12.5" height="12.5" fill="#6c5f46"/><rect x="51" y="408" width="12.5" height="12.5" fill="#6b5e44"/><rect x="63" y="408" width="12.5" height="12.5" fill="#6b5d42"/><rect x="75" y="408" width="12.5" height="12.5" fill="#6a5c41"/><rect x="87" y="408" width="12.5" height="12.5" fill="#6a5b3f"/><rect x="99" y="408" width="12.5" height="12.5" fill="#6c5d40"/><rect x="111" y="408" width="12.5" height="12.5" fill="#746345"/><rect x="123" y="408" width="12.5" height="12.5" fill="#796848"/><rect x="135" y="408" width="12.5" height="12.5" fill="#7e6b4b"/><rect x="147" y="408" width="12.5" height="12.5" fill="#826e4d"/><rect x="159" y="408" width="12.5" height="12.5" fill="#85714f"/><rect x="171" y="408" width="12.5" height="12.5" fill="#887451"/><rect x="183" y="408" width="12.5" height="12.5" fill="#8b7652"/><rect x="195" y="408" width="12.5" height="12.5" fill="#8e7854"/><rect x="207" y="408" width="12.5" height="12.5" fill="#917a55"/><rect x="219" y="408" width="12.5" height="12.5" fill="#947c57"/><rect x="231" y="408" width="12.5" height="12.5" fill="#967e58"/><rect x="243" y="408" width="12.5" height="12.5" fill="#98805a"/><rect x="255" y="408" width="12.5" height="12.5" fill="#9b825b"/><rect x="267" y="408" width="12.5" height="12.5" fill="#9d845c"/><rect x="279" y="408" width="12.5" height="12.5" fill="#9f855d"/><rect x="291" y="408" width="12.5" height="12.5" fill="#a0875e"/><rect x="303" y="408" width="12.5" height="12.5" fill="#a1875d"/><rect x="315" y="408" width="12.5" height="12.5" fill="#a0875c"/><rect x="327" y="408" width="12.5" height="12.5" fill="#9e8559"/><rect x="339" y="408" width="12.5" height="12.5" fill="#9a8255"/><rect x="351" y="408" width="12.5" height="12.5" fill="#947c4f"/><rect x="363" y="408" width="12.5" height="12.5" fill="#887145"/><rect x="375" y="408" width="12.5" height="12.5" fill="#826b3e"/><rect x="387" y="408" width="12.5" height="12.5" fill="#836c3e"/><rect x="399" y="408" width="12.5" height="12.5" fill="#846d3f"/><rect x="39" y="420" width="12.5" height="12.5" fill="#6c5f46"/><rect x="51" y="420" width="12.5" height="12.5" fill="#6b5e44"/><rect x="63" y="420" width="12.5" height="12.5" fill="#6b5d43"/><rect x="75" y="420" width="12.5" height="12.5" fill="#6a5c41"/><rect x="87" y="420" width="12.5" height="12.5" fill="#6a5b40"/><rect x="99" y="420" width="12.5" height="12.5" fill="#695a3e"/><rect x="111" y="420" width="12.5" height="12.5" fill="#68593c"/><rect x="123" y="420" width="12.5" height="12.5" fill="#6e5e40"/><rect x="135" y="420" width="12.5" height="12.5" fill="#736243"/><rect x="147" y="420" width="12.5" height="12.5" fill="#776546"/><rect x="159" y="420" width="12.5" height="12.5" fill="#7b6848"/><rect x="171" y="420" width="12.5" height="12.5" fill="#7e6a49"/><rect x="183" y="420" width="12.5" height="12.5" fill="#816d4b"/><rect x="195" y="420" width="12.5" height="12.5" fill="#846f4c"/><rect x="207" y="420" width="12.5" height="12.5" fill="#87714e"/><rect x="219" y="420" width="12.5" height="12.5" fill="#8a744f"/><rect x="231" y="420" width="12.5" height="12.5" fill="#8c7651"/><rect x="243" y="420" width="12.5" height="12.5" fill="#8f7853"/><rect x="255" y="420" width="12.5" height="12.5" fill="#917a54"/><rect x="267" y="420" width="12.5" height="12.5" fill="#947c55"/><rect x="279" y="420" width="12.5" height="12.5" fill="#957d57"/><rect x="291" y="420" width="12.5" height="12.5" fill="#977f57"/><rect x="303" y="420" width="12.5" height="12.5" fill="#977f56"/><rect x="315" y="420" width="12.5" height="12.5" fill="#957e54"/><rect x="327" y="420" width="12.5" height="12.5" fill="#937b51"/><rect x="339" y="420" width="12.5" height="12.5" fill="#8e764c"/><rect x="351" y="420" width="12.5" height="12.5" fill="#856f43"/><rect x="363" y="420" width="12.5" height="12.5" fill="#806a3e"/><rect x="375" y="420" width="12.5" height="12.5" fill="#826b3f"/><rect x="387" y="420" width="12.5" height="12.5" fill="#836c3f"/><rect x="51" y="432" width="12.5" height="12.5" fill="#6b5e45"/><rect x="63" y="432" width="12.5" height="12.5" fill="#6b5d43"/><rect x="75" y="432" width="12.5" height="12.5" fill="#6a5c42"/><rect x="87" y="432" width="12.5" height="12.5" fill="#695b40"/><rect x="99" y="432" width="12.5" height="12.5" fill="#695a3f"/><rect x="111" y="432" width="12.5" height="12.5" fill="#68583d"/><rect x="123" y="432" width="12.5" height="12.5" fill="#66573b"/><rect x="135" y="432" width="12.5" height="12.5" fill="#67573a"/><rect x="147" y="432" width="12.5" height="12.5" fill="#6b5a3d"/><rect x="159" y="432" width="12.5" height="12.5" fill="#6f5d3f"/><rect x="171" y="432" width="12.5" height="12.5" fill="#736041"/><rect x="183" y="432" width="12.5" height="12.5" fill="#766343"/><rect x="195" y="432" width="12.5" height="12.5" fill="#796544"/><rect x="207" y="432" width="12.5" height="12.5" fill="#7c6846"/><rect x="219" y="432" width="12.5" height="12.5" fill="#7f6a48"/><rect x="231" y="432" width="12.5" height="12.5" fill="#826c49"/><rect x="243" y="432" width="12.5" height="12.5" fill="#846f4b"/><rect x="255" y="432" width="12.5" height="12.5" fill="#87714c"/><rect x="267" y="432" width="12.5" height="12.5" fill="#89734e"/><rect x="279" y="432" width="12.5" height="12.5" fill="#8b744f"/><rect x="291" y="432" width="12.5" height="12.5" fill="#8c754f"/><rect x="303" y="432" width="12.5" height="12.5" fill="#8b754e"/><rect x="315" y="432" width="12.5" height="12.5" fill="#89734b"/><rect x="327" y="432" width="12.5" height="12.5" fill="#856f47"/><rect x="339" y="432" width="12.5" height="12.5" fill="#7f6940"/><rect x="351" y="432" width="12.5" height="12.5" fill="#7e693f"/><rect x="363" y="432" width="12.5" height="12.5" fill="#806a3f"/><rect x="375" y="432" width="12.5" height="12.5" fill="#826b3f"/><rect x="387" y="432" width="12.5" height="12.5" fill="#836d40"/><rect x="51" y="444" width="12.5" height="12.5" fill="#6b5d45"/><rect x="63" y="444" width="12.5" height="12.5" fill="#6a5c44"/><rect x="75" y="444" width="12.5" height="12.5" fill="#695b42"/><rect x="87" y="444" width="12.5" height="12.5" fill="#695a41"/><rect x="99" y="444" width="12.5" height="12.5" fill="#68593f"/><rect x="111" y="444" width="12.5" height="12.5" fill="#67583d"/><rect x="123" y="444" width="12.5" height="12.5" fill="#65563b"/><rect x="135" y="444" width="12.5" height="12.5" fill="#645439"/><rect x="147" y="444" width="12.5" height="12.5" fill="#635338"/><rect x="159" y="444" width="12.5" height="12.5" fill="#625236"/><rect x="171" y="444" width="12.5" height="12.5" fill="#665538"/><rect x="183" y="444" width="12.5" height="12.5" fill="#6a583a"/><rect x="195" y="444" width="12.5" height="12.5" fill="#6d5a3c"/><rect x="207" y="444" width="12.5" height="12.5" fill="#705d3d"/><rect x="219" y="444" width="12.5" height="12.5" fill="#73603f"/><rect x="231" y="444" width="12.5" height="12.5" fill="#766240"/><rect x="243" y="444" width="12.5" height="12.5" fill="#786442"/><rect x="255" y="444" width="12.5" height="12.5" fill="#7b6743"/><rect x="267" y="444" width="12.5" height="12.5" fill="#7d6845"/><rect x="279" y="444" width="12.5" height="12.5" fill="#7f6a45"/><rect x="291" y="444" width="12.5" height="12.5" fill="#7f6a45"/><rect x="303" y="444" width="12.5" height="12.5" fill="#7e6943"/><rect x="315" y="444" width="12.5" height="12.5" fill="#7b6640"/><rect x="327" y="444" width="12.5" height="12.5" fill="#7a663e"/><rect x="339" y="444" width="12.5" height="12.5" fill="#7c673f"/><rect x="351" y="444" width="12.5" height="12.5" fill="#7e693f"/><rect x="363" y="444" width="12.5" height="12.5" fill="#806a3f"/><rect x="375" y="444" width="12.5" height="12.5" fill="#816c40"/><rect x="63" y="456" width="12.5" height="12.5" fill="#695c44"/><rect x="75" y="456" width="12.5" height="12.5" fill="#695b42"/><rect x="87" y="456" width="12.5" height="12.5" fill="#685a41"/><rect x="99" y="456" width="12.5" height="12.5" fill="#67583f"/><rect x="111" y="456" width="12.5" height="12.5" fill="#66573d"/><rect x="123" y="456" width="12.5" height="12.5" fill="#64553c"/><rect x="135" y="456" width="12.5" height="12.5" fill="#63543a"/><rect x="147" y="456" width="12.5" height="12.5" fill="#625238"/><rect x="159" y="456" width="12.5" height="12.5" fill="#615136"/><rect x="171" y="456" width="12.5" height="12.5" fill="#615035"/><rect x="183" y="456" width="12.5" height="12.5" fill="#605033"/><rect x="195" y="456" width="12.5" height="12.5" fill="#615033"/><rect x="207" y="456" width="12.5" height="12.5" fill="#635133"/><rect x="219" y="456" width="12.5" height="12.5" fill="#665435"/><rect x="231" y="456" width="12.5" height="12.5" fill="#695636"/><rect x="243" y="456" width="12.5" height="12.5" fill="#6b5938"/><rect x="255" y="456" width="12.5" height="12.5" fill="#6e5b39"/><rect x="267" y="456" width="12.5" height="12.5" fill="#6f5c3a"/><rect x="279" y="456" width="12.5" height="12.5" fill="#705d3a"/><rect x="291" y="456" width="12.5" height="12.5" fill="#735f3b"/><rect x="303" y="456" width="12.5" height="12.5" fill="#75623d"/><rect x="315" y="456" width="12.5" height="12.5" fill="#78643e"/><rect x="327" y="456" width="12.5" height="12.5" fill="#7a663e"/><rect x="339" y="456" width="12.5" height="12.5" fill="#7c673f"/><rect x="351" y="456" width="12.5" height="12.5" fill="#7e693f"/><rect x="363" y="456" width="12.5" height="12.5" fill="#7f6a40"/><rect x="75" y="468" width="12.5" height="12.5" fill="#685a42"/><rect x="87" y="468" width="12.5" height="12.5" fill="#675941"/><rect x="99" y="468" width="12.5" height="12.5" fill="#66583f"/><rect x="111" y="468" width="12.5" height="12.5" fill="#65563e"/><rect x="123" y="468" width="12.5" height="12.5" fill="#64553c"/><rect x="135" y="468" width="12.5" height="12.5" fill="#62533a"/><rect x="147" y="468" width="12.5" height="12.5" fill="#615238"/><rect x="159" y="468" width="12.5" height="12.5" fill="#605137"/><rect x="171" y="468" width="12.5" height="12.5" fill="#605035"/><rect x="183" y="468" width="12.5" height="12.5" fill="#605034"/><rect x="195" y="468" width="12.5" height="12.5" fill="#605033"/><rect x="207" y="468" width="12.5" height="12.5" fill="#615032"/><rect x="219" y="468" width="12.5" height="12.5" fill="#625132"/><rect x="231" y="468" width="12.5" height="12.5" fill="#645333"/><rect x="243" y="468" width="12.5" height="12.5" fill="#665534"/><rect x="255" y="468" width="12.5" height="12.5" fill="#695736"/><rect x="267" y="468" width="12.5" height="12.5" fill="#6c5a38"/><rect x="279" y="468" width="12.5" height="12.5" fill="#6f5c3a"/><rect x="291" y="468" width="12.5" height="12.5" fill="#725f3b"/><rect x="303" y="468" width="12.5" height="12.5" fill="#75613d"/><rect x="315" y="468" width="12.5" height="12.5" fill="#77633e"/><rect x="327" y="468" width="12.5" height="12.5" fill="#79653e"/><rect x="339" y="468" width="12.5" height="12.5" fill="#7b673f"/><rect x="351" y="468" width="12.5" height="12.5" fill="#7d6940"/><rect x="87" y="480" width="12.5" height="12.5" fill="#665941"/><rect x="99" y="480" width="12.5" height="12.5" fill="#65573f"/><rect x="111" y="480" width="12.5" height="12.5" fill="#64563e"/><rect x="123" y="480" width="12.5" height="12.5" fill="#63543c"/><rect x="135" y="480" width="12.5" height="12.5" fill="#62533a"/><rect x="147" y="480" width="12.5" height="12.5" fill="#615239"/><rect x="159" y="480" width="12.5" height="12.5" fill="#605137"/><rect x="171" y="480" width="12.5" height="12.5" fill="#605036"/><rect x="183" y="480" width="12.5" height="12.5" fill="#5f5034"/><rect x="195" y="480" width="12.5" height="12.5" fill="#605033"/><rect x="207" y="480" width="12.5" height="12.5" fill="#605033"/><rect x="219" y="480" width="12.5" height="12.5" fill="#625133"/><rect x="231" y="480" width="12.5" height="12.5" fill="#635334"/><rect x="243" y="480" width="12.5" height="12.5" fill="#665535"/><rect x="255" y="480" width="12.5" height="12.5" fill="#695736"/><rect x="267" y="480" width="12.5" height="12.5" fill="#6b5a38"/><rect x="279" y="480" width="12.5" height="12.5" fill="#6e5c3a"/><rect x="291" y="480" width="12.5" height="12.5" fill="#715f3b"/><rect x="303" y="480" width="12.5" height="12.5" fill="#74613c"/><rect x="315" y="480" width="12.5" height="12.5" fill="#76633e"/><rect x="327" y="480" width="12.5" height="12.5" fill="#78653e"/><rect x="339" y="480" width="12.5" height="12.5" fill="#7b673f"/><rect x="111" y="492" width="12.5" height="12.5" fill="#63553e"/><rect x="123" y="492" width="12.5" height="12.5" fill="#62543c"/><rect x="135" y="492" width="12.5" height="12.5" fill="#61533b"/><rect x="147" y="492" width="12.5" height="12.5" fill="#605239"/><rect x="159" y="492" width="12.5" height="12.5" fill="#605138"/><rect x="171" y="492" width="12.5" height="12.5" fill="#5f5036"/><rect x="183" y="492" width="12.5" height="12.5" fill="#5f5035"/><rect x="195" y="492" width="12.5" height="12.5" fill="#605034"/><rect x="207" y="492" width="12.5" height="12.5" fill="#605134"/><rect x="219" y="492" width="12.5" height="12.5" fill="#615233"/><rect x="231" y="492" width="12.5" height="12.5" fill="#635334"/><rect x="243" y="492" width="12.5" height="12.5" fill="#665535"/><rect x="255" y="492" width="12.5" height="12.5" fill="#685737"/><rect x="267" y="492" width="12.5" height="12.5" fill="#6b5a38"/><rect x="279" y="492" width="12.5" height="12.5" fill="#6e5c3a"/><rect x="291" y="492" width="12.5" height="12.5" fill="#705e3b"/><rect x="303" y="492" width="12.5" height="12.5" fill="#73613c"/><rect x="315" y="492" width="12.5" height="12.5" fill="#75633d"/><rect x="327" y="492" width="12.5" height="12.5" fill="#78653e"/><rect x="123" y="504" width="12.5" height="12.5" fill="#62543d"/><rect x="135" y="504" width="12.5" height="12.5" fill="#61533b"/><rect x="147" y="504" width="12.5" height="12.5" fill="#60523a"/><rect x="159" y="504" width="12.5" height="12.5" fill="#605138"/><rect x="171" y="504" width="12.5" height="12.5" fill="#5f5137"/><rect x="183" y="504" width="12.5" height="12.5" fill="#5f5036"/><rect x="195" y="504" width="12.5" height="12.5" fill="#605135"/><rect x="207" y="504" width="12.5" height="12.5" fill="#605134"/><rect x="219" y="504" width="12.5" height="12.5" fill="#625234"/><rect x="231" y="504" width="12.5" height="12.5" fill="#635435"/><rect x="243" y="504" width="12.5" height="12.5" fill="#655536"/><rect x="255" y="504" width="12.5" height="12.5" fill="#685737"/><rect x="267" y="504" width="12.5" height="12.5" fill="#6a5a38"/><rect x="279" y="504" width="12.5" height="12.5" fill="#6d5c3a"/><rect x="291" y="504" width="12.5" height="12.5" fill="#705e3b"/><rect x="303" y="504" width="12.5" height="12.5" fill="#72603c"/><rect x="159" y="516" width="12.5" height="12.5" fill="#605139"/><rect x="171" y="516" width="12.5" height="12.5" fill="#5f5137"/><rect x="183" y="516" width="12.5" height="12.5" fill="#5f5136"/><rect x="195" y="516" width="12.5" height="12.5" fill="#605136"/><rect x="207" y="516" width="12.5" height="12.5" fill="#615235"/><rect x="219" y="516" width="12.5" height="12.5" fill="#625335"/><rect x="231" y="516" width="12.5" height="12.5" fill="#635436"/><rect x="243" y="516" width="12.5" height="12.5" fill="#655636"/><rect x="255" y="516" width="12.5" height="12.5" fill="#685837"/><rect x="267" y="516" width="12.5" height="12.5" fill="#6a5a39"/></g>
<g mask="url(#tm)" style="mix-blend-mode:overlay" opacity="0.45"><rect x="39" y="144" width="362" height="363" filter="url(#bump)"/></g>
</g>
<circle cx="220" cy="325" r="181" fill="url(#srim)" mask="url(#rm)"/>
</svg>
<svg width="800" height="507" style="position:absolute;left:0;top:0"><defs><clipPath id="front"><path d="M389.1 389.6 L388.5 391.0 L387.9 392.3 L387.3 393.6 L386.6 394.9 L385.8 396.2 L385.0 397.5 L384.2 398.7 L383.3 399.9 L382.3 401.1 L381.3 402.3 L380.2 403.4 L379.1 404.5 L378.0 405.6 L376.8 406.7 L375.6 407.7 L374.3 408.7 L372.9 409.7 L371.5 410.7 L370.1 411.6 L368.6 412.5 L367.1 413.4 L365.5 414.3 L363.9 415.1 L362.3 415.9 L360.6 416.7 L358.8 417.5 L357.0 418.2 L355.2 418.9 L353.3 419.5 L351.4 420.2 L349.5 420.8 L347.5 421.4 L345.5 421.9 L343.4 422.4 L341.3 422.9 L339.2 423.4 L337.0 423.8 L334.8 424.2 L332.5 424.6 L330.2 424.9 L327.9 425.2 L325.6 425.5 L323.2 425.8 L320.8 426.0 L318.4 426.2 L315.9 426.3 L313.4 426.4 L310.9 426.5 L308.3 426.6 L305.7 426.6 L303.1 426.6 L300.5 426.6 L297.8 426.5 L295.1 426.5 L292.4 426.3 L289.7 426.2 L286.9 426.0 L284.2 425.8 L281.4 425.5 L278.6 425.3 L275.7 425.0 L272.9 424.6 L270.0 424.2 L267.2 423.8 L264.3 423.4 L261.4 423.0 L258.5 422.5 L255.5 422.0 L252.6 421.4 L249.7 420.8 L246.7 420.2 L243.7 419.6 L240.8 418.9 L237.8 418.2 L234.8 417.5 L231.8 416.8 L228.8 416.0 L225.8 415.2 L222.8 414.4 L219.8 413.5 L216.8 412.6 L213.8 411.7 L210.8 410.8 L207.9 409.8 L204.9 408.8 L201.9 407.8 L198.9 406.7 L195.9 405.7 L193.0 404.6 L190.0 403.5 L187.1 402.3 L184.1 401.2 L181.2 400.0 L178.3 398.8 L175.4 397.5 L172.5 396.3 L169.6 395.0 L166.8 393.7 L163.9 392.4 L161.1 391.1 L158.3 389.7 L155.5 388.3 L152.8 386.9 L150.0 385.5 L147.3 384.1 L144.6 382.6 L141.9 381.1 L139.2 379.7 L136.6 378.2 L134.0 376.6 L131.4 375.1 L128.9 373.6 L126.3 372.0 L123.8 370.4 L121.4 368.8 L118.9 367.2 L116.5 365.6 L114.1 364.0 L111.8 362.3 L109.5 360.6 L107.2 359.0 L105.0 357.3 L102.8 355.6 L100.6 353.9 L98.5 352.2 L96.4 350.5 L94.3 348.8 L92.3 347.1 L90.3 345.3 L88.4 343.6 L86.4 341.8 L84.6 340.1 L82.8 338.3 L81.0 336.6 L79.2 334.8 L77.5 333.0 L75.9 331.3 L74.3 329.5 L72.7 327.7 L71.2 325.9 L69.7 324.2 L68.3 322.4 L66.9 320.6 L65.6 318.9 L64.3 317.1 L63.1 315.3 L61.9 313.6 L60.7 311.8 L59.6 310.0 L58.6 308.3 L57.6 306.5 L56.6 304.8 L55.7 303.1 L54.9 301.3 L54.1 299.6 L53.3 297.9 L52.6 296.2 L52.0 294.5 L51.4 292.8 L50.9 291.1 L50.4 289.5 L49.9 287.8 L49.5 286.2 L49.2 284.5 L48.9 282.9 L48.7 281.3 L48.5 279.7 L48.4 278.1 L48.3 276.6 L48.3 275.0 L48.3 273.5 L48.4 271.9 L48.5 270.4 L48.7 268.9 L49.0 267.5 L49.2 266.0 L49.6 264.6 L50.0 263.2 L50.4 261.8 L50.9 260.4 L-50 600 L500 600 Z"/></clipPath><clipPath id="sc2"><circle cx="220" cy="325" r="181"/></clipPath></defs><g clip-path="url(#sc2)"><g clip-path="url(#front)"><path d="M-32.4 106.4L-50.0 107.3 M-8.2 106.8L-50.0 109.1 M16.7 107.3L-50.0 111.1 M42.3 107.8L-50.0 113.4 M68.6 108.3L-50.0 115.9 M95.8 108.9L-50.0 118.8 M123.7 109.4L-50.0 122.0 M152.5 110.0L-50.0 125.7 M182.1 110.6L-50.0 129.9 M212.7 111.2L-50.0 134.9 M244.2 111.8L-50.0 140.9 M276.8 112.4L-50.0 148.0 M310.4 113.1L-50.0 156.7 M345.2 113.8L-50.0 167.7 M381.1 114.5L-50.0 181.9 M418.2 115.2L-50.0 201.0 M456.7 115.9L-50.0 228.0 M496.5 116.7L-50.0 269.2 M537.7 117.5L-50.0 339.6 M580.5 118.4L-50.0 487.6 M624.9 119.2L286.8 560.0 M671.0 120.1L747.8 560.0 M718.9 121.1L850.0 238.4 M768.7 122.1L850.0 161.5 M820.5 123.1L850.0 132.9 M-50.0 106.0L850.0 123.7 M-50.0 106.6L850.0 124.5 M-50.0 108.2L850.0 126.9 M-50.0 109.9L850.0 129.5 M-50.0 111.7L850.0 132.4 M-50.0 113.8L850.0 135.5 M-50.0 116.1L850.0 139.0 M-50.0 118.6L850.0 142.8 M-50.0 121.5L850.0 147.1 M-50.0 124.7L850.0 152.0 M-50.0 128.3L850.0 157.5 M-50.0 132.4L850.0 163.8 M-50.0 137.2L850.0 171.1 M-50.0 142.8L850.0 179.6 M-50.0 149.5L850.0 189.7 M-50.0 157.5L850.0 201.9 M-50.0 167.3L850.0 216.8 M-50.0 179.7L850.0 235.6 M-50.0 195.7L850.0 259.9 M-50.0 217.1L850.0 292.5 M-50.0 247.5L850.0 338.7 M-50.0 293.9L850.0 409.2 M-50.0 373.3L850.0 529.8 M-50.0 540.4L22.3 560.0" stroke="#9a9a9a" stroke-opacity="0.4" stroke-width="1" fill="none" shape-rendering="crispEdges"/></g></g></svg>
<div class="a" style="left:784px;top:2.5px;width:6px;height:505px;background:#1c1c1c"></div>
<div class="a" style="left:790px;top:2.5px;width:2px;height:505px;background:#141414"></div>
<div class="a" style="left:792px;top:2.5px;width:8px;height:20.5px;background:#1e1e1e"></div>
<div class="a" style="left:797px;top:11px;width:5px;height:7px;background:#cfcfcf;border-radius:2px"></div>
<div class="a" style="left:792px;top:23px;width:8px;height:484px;background:#2a2a2a"></div>
<div class="a" style="left:795px;top:31px;width:5px;height:1.5px;background:#bdbdbd"></div>
<div class="a" style="left:792px;top:305px;width:8px;height:17px;background:#1f1f1f"></div>
<div class="a" style="left:797px;top:291px;width:3px;height:8px;background:#8a8a8a;border-radius:1px"></div>
<div class="a" style="left:797px;top:309px;width:3px;height:8px;background:#707070"></div>
<div class="a" style="left:795px;top:331px;width:5px;height:8px;background:#9a9a9a"></div>
<div class="a" style="left:797px;top:347px;width:4px;height:12.5px;background:#4a4a4a;border-radius:2px"></div>
<div class="a" style="left:797px;top:362px;width:4px;height:12.5px;background:#4a4a4a;border-radius:2px"></div>
<div class="a" style="left:792px;top:415px;width:8px;height:92px;background:#262626"></div>
<div class="a" style="left:795px;top:420px;width:5px;height:20px;background:#2e2e2e"></div>
<div class="a" style="left:797px;top:426px;width:3px;height:8px;background:#9a9a9a"></div>
<svg class="a" style="left:794px;top:445px" width="6" height="8"><path d="M1 4 L5 0.5 L5 7.5 Z" fill="#bdbdbd"/></svg>
<svg class="a" style="left:794px;top:461px" width="6" height="8"><path d="M1 4 L5 0.5 L5 7.5 Z" fill="#bdbdbd"/></svg>
<svg class="a" style="left:794px;top:477px" width="6" height="8"><path d="M1 4 L5 0.5 L5 7.5 Z" fill="#bdbdbd"/></svg>
<div class="a" style="left:794px;top:456px;width:6px;height:1px;background:#333"></div>
<div class="a" style="left:794px;top:471px;width:6px;height:1px;background:#333"></div>
<div class="a" style="left:794px;top:487px;width:6px;height:1px;background:#333"></div>
<div class="a" style="left:785px;top:123.5px;width:4px;height:1px;background:#6a6a6a"></div>
<div class="a" style="left:785px;top:128px;width:4px;height:1px;background:#8a8a8a"></div>
<div class="a" style="left:785px;top:132px;width:4px;height:1px;background:#6a6a6a"></div>
<div class="a" style="left:785px;top:137px;width:4px;height:1px;background:#8a8a8a"></div>
<div class="a" style="left:785px;top:142px;width:4px;height:1px;background:#6a6a6a"></div>
<div class="a" style="left:785px;top:151px;width:4px;height:1px;background:#7a7a7a"></div>
<div class="a" style="left:785px;top:161px;width:4px;height:1px;background:#5a5a5a"></div>
<div class="a" style="left:785px;top:177.5px;width:4px;height:1px;background:#7a7a7a"></div>
<div class="a" style="left:785px;top:199.5px;width:4px;height:1px;background:#5a5a5a"></div>
<div class="a" style="left:785px;top:213.5px;width:4px;height:1px;background:#4a4a4a"></div>
<div class="a" style="left:785px;top:233px;width:4px;height:1px;background:#7a7a7a"></div>
<div class="a" style="left:785px;top:288px;width:4px;height:1px;background:#6a6a6a"></div>
<div class="a" style="left:785px;top:333px;width:4px;height:1px;background:#5a5a5a"></div>
<div class="a" style="left:785px;top:401px;width:4px;height:1px;background:#6a6a6a"></div>
<div class="a" style="left:785px;top:23px;width:4px;height:1px;background:#4a4a4a"></div>
<div class="a" style="left:375px;top:9px;width:410px;height:489px;background:#141414"></div>
<div class="a" style="left:376.5px;top:10.5px;width:407px;height:485.5px;background:#2b2b2b"></div>
<div class="a" style="left:376.5px;top:10.5px;width:407px;height:12px;background:#1f1f1f"></div>
<div class="t" style="left:540px;top:11.00px;letter-spacing:0.68px">Shader Settings</div>
<div class="a" style="left:383px;top:34px;width:391px;height:1px;background:#454545"></div>
<div class="cb" style="left:385px;top:39.00px"></div>
<div class="t" style="left:396.5px;top:37.50px;">Modulate Color by Texture</div>
<div class="cb" style="left:385px;top:54.38px"></div>
<div class="t" style="left:396.5px;top:52.88px;">Modulate Gloss by Texture</div>
<div class="cb" style="left:385px;top:69.76px"></div>
<div class="t" style="left:396.5px;top:68.26px;">Modulate Metalness by Texture</div>
<div class="cb" style="left:385px;top:85.14px"></div>
<svg class="a" style="left:385px;top:85.14px" width="9" height="9"><path d="M2.2 4.6 L4 6.5 L7.2 2.3" stroke="#a4a4a4" stroke-width="1" fill="none"/></svg>
<div class="t" style="left:396.5px;top:83.64px;">Use Normalmap Texture</div>
<div class="cb" style="left:385px;top:100.52px"></div>
<svg class="a" style="left:385px;top:100.52px" width="9" height="9"><path d="M2.2 4.6 L4 6.5 L7.2 2.3" stroke="#a4a4a4" stroke-width="1" fill="none"/></svg>
<div class="t" style="left:396.5px;top:99.02px;">Use Cavity</div>
<div class="cb" style="left:385px;top:115.90px"></div>
<div class="t" style="left:396.5px;top:114.40px;">Flat Shading</div>
<div class="a" style="left:383px;top:130px;width:391px;height:1px;background:#454545"></div>
<div class="t" style="left:382.5px;top:137.30px;">Normalmap texture</div>
<svg class="a" style="left:578px;top:132px" width="195" height="23">
<defs><filter id="nm" x="0" y="0" width="100%" height="100%" color-interpolation-filters="sRGB">
<feTurbulence type="turbulence" baseFrequency="0.12 0.3" numOctaves="2" seed="5" result="t"/>
<feColorMatrix in="t" type="matrix" values="3.2 0 0 0 0.3  0 3.0 0 0 0.3  0 0 0 0 0.62  0 0 0 0 1" result="c"/>
<feComponentTransfer in="c"><feFuncR type="table" tableValues="0.45 0.5 0.85 0.45 0.3"/><feFuncG type="table" tableValues="0.47 0.5 0.3 0.75 0.45"/></feComponentTransfer>
</filter></defs>
<rect width="195" height="23" fill="#7a76b6"/>
<rect width="195" height="23" filter="url(#nm)" opacity="0.42"/>
<text x="60.5" y="14.7" font-family="Liberation Sans" font-size="9.5" letter-spacing="0.64" word-spacing="2.5" fill="#d0d0ee" fill-opacity="0.7">Choose Texture</text>
</svg>
<div class="t" style="left:382.5px;top:157.30px;">Textures scale</div>
<div class="rl" style="top:169.40px"></div>
<div class="vb" style="top:156.20px"><div class="vt">0.200</div></div>
<div class="t" style="left:382.5px;top:172.83px;">Top rotation</div>
<div class="rl" style="top:184.93px"></div>
<div class="vb" style="top:171.73px"><div class="vt">0.000</div></div>
<div class="t" style="left:382.5px;top:188.36px;">Side rotation [1]</div>
<div class="rl" style="top:200.46px"></div>
<div class="vb" style="top:187.26px"><div class="vt">0.000</div></div>
<div class="t" style="left:382.5px;top:203.89px;">Side rotation [2]</div>
<div class="rl" style="top:215.99px"></div>
<div class="vb" style="top:202.79px"><div class="vt">0.000</div></div>
<div class="t" style="left:382.5px;top:219.42px;">Flip normal map R</div>
<div class="cb" style="left:497px;top:221.20px"></div>
<div class="t" style="left:382.5px;top:234.95px;">Flip normal map G</div>
<div class="cb" style="left:497px;top:236.73px"></div>
<div class="t" style="left:382.5px;top:250.48px;">Bumpness</div>
<div class="rl" style="top:262.58px"></div>
<div class="vb" style="top:249.38px"><div class="vt">2.00</div></div>
<div class="t" style="left:382.5px;top:266.01px;">SSS degree</div>
<div class="rl" style="top:278.11px"></div>
<div class="vb" style="top:264.91px"><div class="vt">0.000</div></div>
<div class="t" style="left:382.5px;top:281.54px;">Color</div>
<div class="bar" style="top:280.64px;background:#615545"></div>
<div class="t" style="left:382.5px;top:297.07px;">Metalness</div>
<div class="rl" style="top:309.17px"></div>
<div class="vb" style="top:295.97px"><div class="vt">0.000</div></div>
<div class="t" style="left:382.5px;top:312.60px;">Gloss</div>
<div class="rl" style="top:324.70px"></div>
<div class="vb" style="top:311.50px"><div class="vt">0.600</div></div>
<div class="t" style="left:382.5px;top:328.13px;">Cavity Intensity</div>
<div class="rl" style="top:340.23px"></div>
<div class="vb" style="top:327.03px"><div class="vt">72.5</div></div>
<div class="t" style="left:382.5px;top:343.66px;">Cavity Color</div>
<div class="bar" style="top:342.76px;background:#574834"></div>
<div class="t" style="left:382.5px;top:359.19px;">Cavity Metalness</div>
<div class="rl" style="top:371.29px"></div>
<div class="vb" style="top:358.09px"><div class="vt">0.000</div></div>
<div class="t" style="left:382.5px;top:374.72px;">Cavity Glossiness</div>
<div class="rl" style="top:386.82px"></div>
<div class="vb" style="top:373.62px"><div class="vt">0.365</div></div>
<div class="t" style="left:382.5px;top:390.25px;">Bulge Intensity</div>
<div class="rl" style="top:402.35px"></div>
<div class="vb" style="top:389.15px"><div class="vt">9.57</div></div>
<div class="t" style="left:382.5px;top:405.78px;">Bulge Color</div>
<div class="bar" style="top:404.88px;background:#e6be8c"></div>
<div class="t" style="left:382.5px;top:421.31px;">Bulge Metalness</div>
<div class="rl" style="top:433.41px"></div>
<div class="vb" style="top:420.21px"><div class="vt">0.000</div></div>
<div class="t" style="left:382.5px;top:436.84px;">Bulge Gloss</div>
<div class="rl" style="top:448.94px"></div>
<div class="vb" style="top:435.74px"><div class="vt">0.640</div></div>
<div class="t" style="left:382.5px;top:452.37px;">Opacity</div>
<div class="rl" style="top:464.47px"></div>
<div class="vb" style="top:451.27px"><div class="vt">1.00</div></div>
<div class="btn" style="left:454px;width:48px"></div>
<div class="t" style="left:471px;top:477.50px;">OK</div>
<div class="btn" style="left:657px;width:48px"></div>
<div class="t" style="left:665.5px;top:477.50px;">Cancel</div>
</body></html>
